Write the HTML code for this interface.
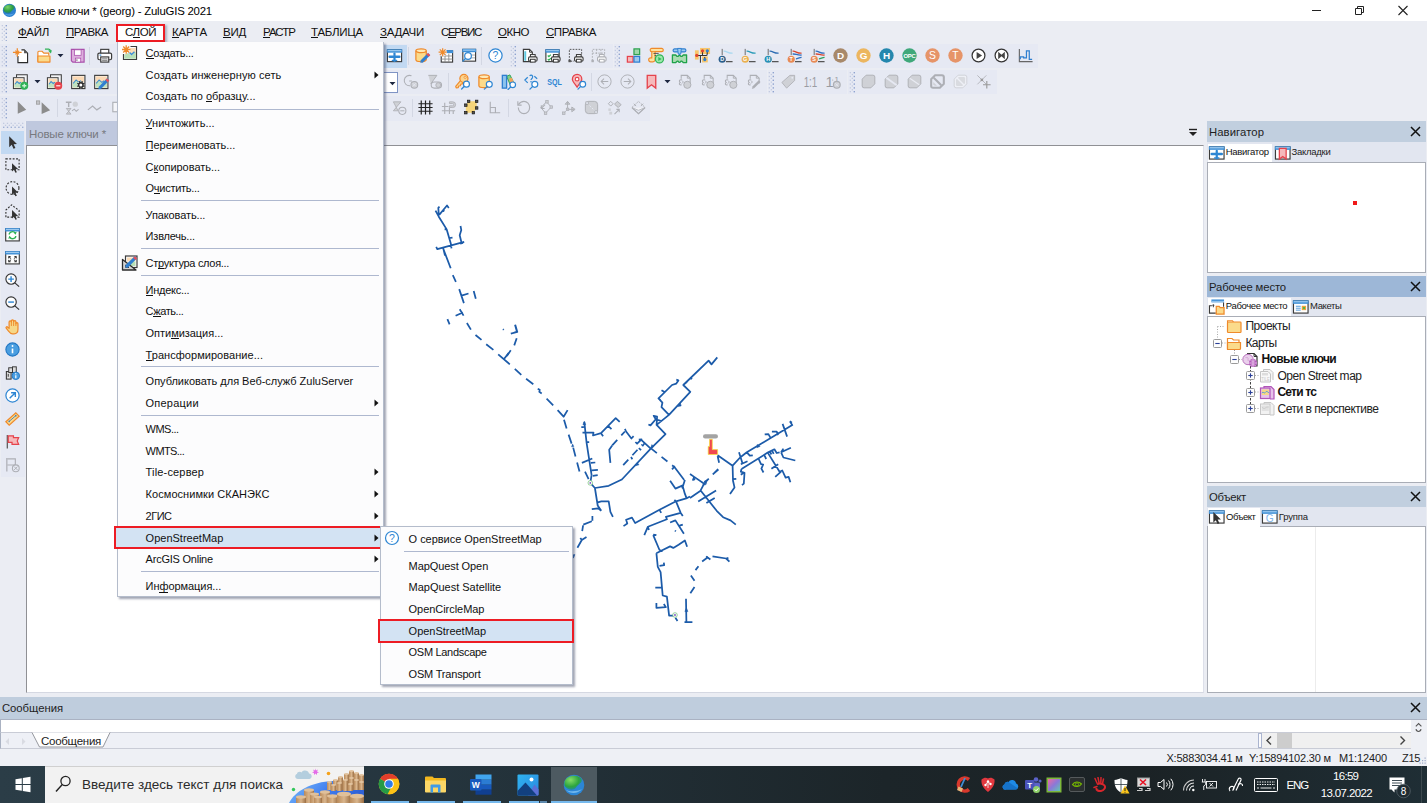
<!DOCTYPE html>
<html lang="ru"><head><meta charset="utf-8"><title>ZuluGIS 2021</title><style>
html,body{margin:0;padding:0;}
body{width:1427px;height:803px;overflow:hidden;position:relative;background:#ebedf3;font-family:"Liberation Sans",sans-serif;}
div,span.t,svg{position:absolute;}
span.t{white-space:pre;}
u{text-decoration:underline;text-underline-offset:1px;text-decoration-thickness:1px;}
</style></head><body>
<div style="left:0px;top:0px;width:1427px;height:21px;background:#ffffff;"></div>
<svg style="left:1300px;top:0" width="127" height="21" viewBox="0 0 127 21"><path d="M12 10.5h9" stroke="#222" stroke-width="1" fill="none"/><path d="M55.5 8.5h6v6h-6z M57.5 8.5v-2h6v6h-2" stroke="#222" stroke-width="1" fill="none"/><path d="M98.5 6l9 9m0-9l-9 9" stroke="#222" stroke-width="1.1" fill="none"/></svg>
<svg style="left:1px;top:24px" width="7" height="17" viewBox="0 0 7 17"><rect x="0.700" y="1.0" width="1.300" height="1.300" fill="#c3cbe0"/><rect x="4.600" y="1.0" width="1.400" height="1.400" fill="#8fa3cf"/><rect x="2.700" y="2.9" width="1.300" height="1.300" fill="#c3cbe0"/><rect x="0.700" y="4.8" width="1.300" height="1.300" fill="#c3cbe0"/><rect x="4.600" y="4.8" width="1.400" height="1.400" fill="#8fa3cf"/><rect x="2.700" y="6.7" width="1.300" height="1.300" fill="#c3cbe0"/><rect x="0.700" y="8.6" width="1.300" height="1.300" fill="#c3cbe0"/><rect x="4.600" y="8.6" width="1.400" height="1.400" fill="#8fa3cf"/><rect x="2.700" y="10.5" width="1.300" height="1.300" fill="#c3cbe0"/><rect x="0.700" y="12.4" width="1.300" height="1.300" fill="#c3cbe0"/><rect x="4.600" y="12.4" width="1.400" height="1.400" fill="#8fa3cf"/><rect x="2.700" y="14.3" width="1.300" height="1.300" fill="#c3cbe0"/><rect x="0.700" y="16.2" width="1.300" height="1.300" fill="#c3cbe0"/><rect x="4.600" y="16.2" width="1.400" height="1.400" fill="#8fa3cf"/></svg>
<div style="left:116px;top:24px;width:49px;height:18.2px;background:#ffffff;border:2px solid #ed1c24;box-sizing:border-box;box-shadow:1.5px 1px 2px rgba(60,70,100,0.35);"></div>
<div style="left:0px;top:44px;width:612.5px;height:24px;background:#e6e9f3;"></div>
<div style="left:613.5px;top:44px;width:424px;height:24px;background:#e6e9f3;"></div>
<div style="left:0px;top:70px;width:766.5px;height:24px;background:#e6e9f3;"></div>
<div style="left:767.5px;top:70px;width:79px;height:24px;background:#e6e9f3;"></div>
<div style="left:847.5px;top:70px;width:149px;height:24px;background:#e6e9f3;"></div>
<div style="left:0px;top:96px;width:650px;height:24.5px;background:#e6e9f3;"></div>
<svg style="left:1px;top:45px" width="7" height="22" viewBox="0 0 7 22"><rect x="0.700" y="1.0" width="1.300" height="1.300" fill="#c3cbe0"/><rect x="4.600" y="1.0" width="1.400" height="1.400" fill="#8fa3cf"/><rect x="2.700" y="2.9" width="1.300" height="1.300" fill="#c3cbe0"/><rect x="0.700" y="4.8" width="1.300" height="1.300" fill="#c3cbe0"/><rect x="4.600" y="4.8" width="1.400" height="1.400" fill="#8fa3cf"/><rect x="2.700" y="6.7" width="1.300" height="1.300" fill="#c3cbe0"/><rect x="0.700" y="8.6" width="1.300" height="1.300" fill="#c3cbe0"/><rect x="4.600" y="8.6" width="1.400" height="1.400" fill="#8fa3cf"/><rect x="2.700" y="10.5" width="1.300" height="1.300" fill="#c3cbe0"/><rect x="0.700" y="12.4" width="1.300" height="1.300" fill="#c3cbe0"/><rect x="4.600" y="12.4" width="1.400" height="1.400" fill="#8fa3cf"/><rect x="2.700" y="14.3" width="1.300" height="1.300" fill="#c3cbe0"/><rect x="0.700" y="16.2" width="1.300" height="1.300" fill="#c3cbe0"/><rect x="4.600" y="16.2" width="1.400" height="1.400" fill="#8fa3cf"/><rect x="2.700" y="18.1" width="1.300" height="1.300" fill="#c3cbe0"/><rect x="0.700" y="20.0" width="1.300" height="1.300" fill="#c3cbe0"/><rect x="4.600" y="20.0" width="1.400" height="1.400" fill="#8fa3cf"/></svg>
<svg style="left:1px;top:71px" width="7" height="22" viewBox="0 0 7 22"><rect x="0.700" y="1.0" width="1.300" height="1.300" fill="#c3cbe0"/><rect x="4.600" y="1.0" width="1.400" height="1.400" fill="#8fa3cf"/><rect x="2.700" y="2.9" width="1.300" height="1.300" fill="#c3cbe0"/><rect x="0.700" y="4.8" width="1.300" height="1.300" fill="#c3cbe0"/><rect x="4.600" y="4.8" width="1.400" height="1.400" fill="#8fa3cf"/><rect x="2.700" y="6.7" width="1.300" height="1.300" fill="#c3cbe0"/><rect x="0.700" y="8.6" width="1.300" height="1.300" fill="#c3cbe0"/><rect x="4.600" y="8.6" width="1.400" height="1.400" fill="#8fa3cf"/><rect x="2.700" y="10.5" width="1.300" height="1.300" fill="#c3cbe0"/><rect x="0.700" y="12.4" width="1.300" height="1.300" fill="#c3cbe0"/><rect x="4.600" y="12.4" width="1.400" height="1.400" fill="#8fa3cf"/><rect x="2.700" y="14.3" width="1.300" height="1.300" fill="#c3cbe0"/><rect x="0.700" y="16.2" width="1.300" height="1.300" fill="#c3cbe0"/><rect x="4.600" y="16.2" width="1.400" height="1.400" fill="#8fa3cf"/><rect x="2.700" y="18.1" width="1.300" height="1.300" fill="#c3cbe0"/><rect x="0.700" y="20.0" width="1.300" height="1.300" fill="#c3cbe0"/><rect x="4.600" y="20.0" width="1.400" height="1.400" fill="#8fa3cf"/></svg>
<svg style="left:1px;top:97px" width="7" height="22" viewBox="0 0 7 22"><rect x="0.700" y="1.0" width="1.300" height="1.300" fill="#c3cbe0"/><rect x="4.600" y="1.0" width="1.400" height="1.400" fill="#8fa3cf"/><rect x="2.700" y="2.9" width="1.300" height="1.300" fill="#c3cbe0"/><rect x="0.700" y="4.8" width="1.300" height="1.300" fill="#c3cbe0"/><rect x="4.600" y="4.8" width="1.400" height="1.400" fill="#8fa3cf"/><rect x="2.700" y="6.7" width="1.300" height="1.300" fill="#c3cbe0"/><rect x="0.700" y="8.6" width="1.300" height="1.300" fill="#c3cbe0"/><rect x="4.600" y="8.6" width="1.400" height="1.400" fill="#8fa3cf"/><rect x="2.700" y="10.5" width="1.300" height="1.300" fill="#c3cbe0"/><rect x="0.700" y="12.4" width="1.300" height="1.300" fill="#c3cbe0"/><rect x="4.600" y="12.4" width="1.400" height="1.400" fill="#8fa3cf"/><rect x="2.700" y="14.3" width="1.300" height="1.300" fill="#c3cbe0"/><rect x="0.700" y="16.2" width="1.300" height="1.300" fill="#c3cbe0"/><rect x="4.600" y="16.2" width="1.400" height="1.400" fill="#8fa3cf"/><rect x="2.700" y="18.1" width="1.300" height="1.300" fill="#c3cbe0"/><rect x="0.700" y="20.0" width="1.300" height="1.300" fill="#c3cbe0"/><rect x="4.600" y="20.0" width="1.400" height="1.400" fill="#8fa3cf"/></svg>
<svg style="left:510px;top:45px" width="7" height="22" viewBox="0 0 7 22"><rect x="0.700" y="1.0" width="1.300" height="1.300" fill="#c3cbe0"/><rect x="4.600" y="1.0" width="1.400" height="1.400" fill="#8fa3cf"/><rect x="2.700" y="2.9" width="1.300" height="1.300" fill="#c3cbe0"/><rect x="0.700" y="4.8" width="1.300" height="1.300" fill="#c3cbe0"/><rect x="4.600" y="4.8" width="1.400" height="1.400" fill="#8fa3cf"/><rect x="2.700" y="6.7" width="1.300" height="1.300" fill="#c3cbe0"/><rect x="0.700" y="8.6" width="1.300" height="1.300" fill="#c3cbe0"/><rect x="4.600" y="8.6" width="1.400" height="1.400" fill="#8fa3cf"/><rect x="2.700" y="10.5" width="1.300" height="1.300" fill="#c3cbe0"/><rect x="0.700" y="12.4" width="1.300" height="1.300" fill="#c3cbe0"/><rect x="4.600" y="12.4" width="1.400" height="1.400" fill="#8fa3cf"/><rect x="2.700" y="14.3" width="1.300" height="1.300" fill="#c3cbe0"/><rect x="0.700" y="16.2" width="1.300" height="1.300" fill="#c3cbe0"/><rect x="4.600" y="16.2" width="1.400" height="1.400" fill="#8fa3cf"/><rect x="2.700" y="18.1" width="1.300" height="1.300" fill="#c3cbe0"/><rect x="0.700" y="20.0" width="1.300" height="1.300" fill="#c3cbe0"/><rect x="4.600" y="20.0" width="1.400" height="1.400" fill="#8fa3cf"/></svg>
<svg style="left:614px;top:45px" width="7" height="22" viewBox="0 0 7 22"><rect x="0.700" y="1.0" width="1.300" height="1.300" fill="#c3cbe0"/><rect x="4.600" y="1.0" width="1.400" height="1.400" fill="#8fa3cf"/><rect x="2.700" y="2.9" width="1.300" height="1.300" fill="#c3cbe0"/><rect x="0.700" y="4.8" width="1.300" height="1.300" fill="#c3cbe0"/><rect x="4.600" y="4.8" width="1.400" height="1.400" fill="#8fa3cf"/><rect x="2.700" y="6.7" width="1.300" height="1.300" fill="#c3cbe0"/><rect x="0.700" y="8.6" width="1.300" height="1.300" fill="#c3cbe0"/><rect x="4.600" y="8.6" width="1.400" height="1.400" fill="#8fa3cf"/><rect x="2.700" y="10.5" width="1.300" height="1.300" fill="#c3cbe0"/><rect x="0.700" y="12.4" width="1.300" height="1.300" fill="#c3cbe0"/><rect x="4.600" y="12.4" width="1.400" height="1.400" fill="#8fa3cf"/><rect x="2.700" y="14.3" width="1.300" height="1.300" fill="#c3cbe0"/><rect x="0.700" y="16.2" width="1.300" height="1.300" fill="#c3cbe0"/><rect x="4.600" y="16.2" width="1.400" height="1.400" fill="#8fa3cf"/><rect x="2.700" y="18.1" width="1.300" height="1.300" fill="#c3cbe0"/><rect x="0.700" y="20.0" width="1.300" height="1.300" fill="#c3cbe0"/><rect x="4.600" y="20.0" width="1.400" height="1.400" fill="#8fa3cf"/></svg>
<svg style="left:768px;top:71px" width="7" height="22" viewBox="0 0 7 22"><rect x="0.700" y="1.0" width="1.300" height="1.300" fill="#c3cbe0"/><rect x="4.600" y="1.0" width="1.400" height="1.400" fill="#8fa3cf"/><rect x="2.700" y="2.9" width="1.300" height="1.300" fill="#c3cbe0"/><rect x="0.700" y="4.8" width="1.300" height="1.300" fill="#c3cbe0"/><rect x="4.600" y="4.8" width="1.400" height="1.400" fill="#8fa3cf"/><rect x="2.700" y="6.7" width="1.300" height="1.300" fill="#c3cbe0"/><rect x="0.700" y="8.6" width="1.300" height="1.300" fill="#c3cbe0"/><rect x="4.600" y="8.6" width="1.400" height="1.400" fill="#8fa3cf"/><rect x="2.700" y="10.5" width="1.300" height="1.300" fill="#c3cbe0"/><rect x="0.700" y="12.4" width="1.300" height="1.300" fill="#c3cbe0"/><rect x="4.600" y="12.4" width="1.400" height="1.400" fill="#8fa3cf"/><rect x="2.700" y="14.3" width="1.300" height="1.300" fill="#c3cbe0"/><rect x="0.700" y="16.2" width="1.300" height="1.300" fill="#c3cbe0"/><rect x="4.600" y="16.2" width="1.400" height="1.400" fill="#8fa3cf"/><rect x="2.700" y="18.1" width="1.300" height="1.300" fill="#c3cbe0"/><rect x="0.700" y="20.0" width="1.300" height="1.300" fill="#c3cbe0"/><rect x="4.600" y="20.0" width="1.400" height="1.400" fill="#8fa3cf"/></svg>
<svg style="left:849px;top:71px" width="7" height="22" viewBox="0 0 7 22"><rect x="0.700" y="1.0" width="1.300" height="1.300" fill="#c3cbe0"/><rect x="4.600" y="1.0" width="1.400" height="1.400" fill="#8fa3cf"/><rect x="2.700" y="2.9" width="1.300" height="1.300" fill="#c3cbe0"/><rect x="0.700" y="4.8" width="1.300" height="1.300" fill="#c3cbe0"/><rect x="4.600" y="4.8" width="1.400" height="1.400" fill="#8fa3cf"/><rect x="2.700" y="6.7" width="1.300" height="1.300" fill="#c3cbe0"/><rect x="0.700" y="8.6" width="1.300" height="1.300" fill="#c3cbe0"/><rect x="4.600" y="8.6" width="1.400" height="1.400" fill="#8fa3cf"/><rect x="2.700" y="10.5" width="1.300" height="1.300" fill="#c3cbe0"/><rect x="0.700" y="12.4" width="1.300" height="1.300" fill="#c3cbe0"/><rect x="4.600" y="12.4" width="1.400" height="1.400" fill="#8fa3cf"/><rect x="2.700" y="14.3" width="1.300" height="1.300" fill="#c3cbe0"/><rect x="0.700" y="16.2" width="1.300" height="1.300" fill="#c3cbe0"/><rect x="4.600" y="16.2" width="1.400" height="1.400" fill="#8fa3cf"/><rect x="2.700" y="18.1" width="1.300" height="1.300" fill="#c3cbe0"/><rect x="0.700" y="20.0" width="1.300" height="1.300" fill="#c3cbe0"/><rect x="4.600" y="20.0" width="1.400" height="1.400" fill="#8fa3cf"/></svg>
<div style="left:1px;top:121px;width:23.5px;height:356px;background:#e6e9f3;"></div>
<svg style="left:2px;top:122px" width="22" height="7" viewBox="0 0 22 7"><rect y="0.700" x="1.0" width="1.300" height="1.300" fill="#c3cbe0"/><rect y="4.600" x="1.0" width="1.400" height="1.400" fill="#9fb0d4"/><rect y="2.700" x="2.9" width="1.300" height="1.300" fill="#c3cbe0"/><rect y="0.700" x="4.8" width="1.300" height="1.300" fill="#c3cbe0"/><rect y="4.600" x="4.8" width="1.400" height="1.400" fill="#9fb0d4"/><rect y="2.700" x="6.7" width="1.300" height="1.300" fill="#c3cbe0"/><rect y="0.700" x="8.6" width="1.300" height="1.300" fill="#c3cbe0"/><rect y="4.600" x="8.6" width="1.400" height="1.400" fill="#9fb0d4"/><rect y="2.700" x="10.5" width="1.300" height="1.300" fill="#c3cbe0"/><rect y="0.700" x="12.4" width="1.300" height="1.300" fill="#c3cbe0"/><rect y="4.600" x="12.4" width="1.400" height="1.400" fill="#9fb0d4"/><rect y="2.700" x="14.3" width="1.300" height="1.300" fill="#c3cbe0"/><rect y="0.700" x="16.2" width="1.300" height="1.300" fill="#c3cbe0"/><rect y="4.600" x="16.2" width="1.400" height="1.400" fill="#9fb0d4"/><rect y="2.700" x="18.1" width="1.300" height="1.300" fill="#c3cbe0"/><rect y="0.700" x="20.0" width="1.300" height="1.300" fill="#c3cbe0"/><rect y="4.600" x="20.0" width="1.400" height="1.400" fill="#9fb0d4"/></svg>
<div style="left:1px;top:131px;width:23px;height:23px;background:#c2d9f2;"></div>
<div style="left:26px;top:121px;width:358px;height:24px;background:#bfc8de;"></div>
<div style="left:26px;top:145px;width:1178px;height:548px;background:#ffffff;border-left:1px solid #8f9094;border-top:1px solid #8f9094;border-right:1px solid #dde0ea;border-bottom:1px solid #d5d8e2;box-sizing:border-box;"></div>
<svg style="left:1188px;top:127.500px" width="11" height="10" viewBox="0 0 11 10"><path d="M1 1.5h8" stroke="#222" stroke-width="1.4"/><path d="M1 4h8l-4 4z" fill="#222"/></svg>
<div style="left:1207px;top:121.4px;width:219px;height:21px;background:#c1cfdf;"></div>
<svg style="left:1410px;top:126.4px" width="11" height="11" viewBox="0 0 11 11"><path d="M1 1l9 9m0-9l-9 9" stroke="#111" stroke-width="1.5" fill="none"/></svg>
<div style="left:1207px;top:142.4px;width:219px;height:19.599999999999994px;background:#e2e6f0;"></div>
<div style="left:1207px;top:162px;width:219px;height:111px;background:#ffffff;border:1px solid #a9adb6;box-sizing:border-box;"></div>
<div style="left:1207px;top:276px;width:219px;height:21px;background:#9db7d7;"></div>
<svg style="left:1410px;top:281px" width="11" height="11" viewBox="0 0 11 11"><path d="M1 1l9 9m0-9l-9 9" stroke="#111" stroke-width="1.5" fill="none"/></svg>
<div style="left:1207px;top:297px;width:219px;height:19px;background:#e2e6f0;"></div>
<div style="left:1207px;top:316px;width:219px;height:167px;background:#ffffff;border:1px solid #a9adb6;box-sizing:border-box;"></div>
<div style="left:1207px;top:486px;width:219px;height:21px;background:#c1cfdf;"></div>
<svg style="left:1410px;top:491px" width="11" height="11" viewBox="0 0 11 11"><path d="M1 1l9 9m0-9l-9 9" stroke="#111" stroke-width="1.5" fill="none"/></svg>
<div style="left:1207px;top:507px;width:219px;height:19px;background:#e2e6f0;"></div>
<div style="left:1207px;top:526px;width:219px;height:167px;background:#ffffff;border:1px solid #a9adb6;box-sizing:border-box;"></div>
<div style="left:1208px;top:144px;width:64px;height:18px;background:#ffffff;"></div>
<div style="left:1208px;top:298.2px;width:82.5px;height:18px;background:#ffffff;"></div>
<div style="left:1208px;top:508px;width:51.5px;height:18.5px;background:#ffffff;"></div>
<div style="left:1353px;top:200.8px;width:4px;height:4px;background:#f01818;"></div>
<div style="left:1315px;top:527px;width:1px;height:165px;background:#ececec;"></div>
<div style="left:0px;top:697px;width:1427px;height:22px;background:#bfcddd;"></div>
<svg style="left:1410px;top:702px" width="11" height="11" viewBox="0 0 11 11"><path d="M1 1l9 9m0-9l-9 9" stroke="#111" stroke-width="1.5" fill="none"/></svg>
<div style="left:0px;top:719px;width:1427px;height:13px;background:#ffffff;border-top:1px solid #aab2c2;border-left:1px solid #aab2c2;box-sizing:border-box;"></div>
<div style="left:0px;top:732px;width:1427px;height:17px;background:#eef0f6;border-top:1px solid #c9ccd6;border-bottom:1px solid #c9ccd6;border-left:1px solid #aab2c2;box-sizing:border-box;"></div>
<svg style="left:0;top:732px" width="130" height="17" viewBox="0 0 130 17"><path d="M32 0.5 L39.5 15 H103 L110 0.5" fill="#fff" stroke="#8b8d94" stroke-width="0.9"/><path d="M9 6l-3.5 3.5L9 13z M22 6l3.500 3.5L22 13z" fill="#d9dbe2"/></svg>
<div style="left:1257.5px;top:733px;width:4px;height:15px;background:#fbfbfd;border:1px solid #aab4cf;box-sizing:border-box;"></div>
<div style="left:1262px;top:733px;width:149px;height:15px;background:#f0f0f0;"></div>
<div style="left:1277.4px;top:733px;width:15px;height:15px;background:#cdcdcd;"></div>
<svg style="left:1262px;top:733px" width="149" height="15" viewBox="0 0 149 15"><path d="M9 3.500l-4 4 4 4 M138.500 3.500l4 4-4 4" stroke="#444" stroke-width="1.400" fill="none"/></svg>
<div style="left:1411px;top:720px;width:16px;height:29px;background:#eef0f5;"></div>
<svg style="left:1411px;top:720px" width="16" height="14" viewBox="0 0 16 14"><path d="M4.800 6.300l2.800-2.800 2.800 2.800 M5 9.200c0.500 3 4.500 3 5 0" stroke="#555" stroke-width="1.100" fill="none"/></svg>
<div style="left:0px;top:749px;width:1427px;height:17px;background:#eef0f5;"></div>
<svg style="left:1418px;top:756px" width="9" height="9" viewBox="0 0 9 9"><rect x="6.5" y="1.5" width="1.200" height="1.200" fill="#9aa8c8"/><rect x="4" y="4" width="1.200" height="1.200" fill="#9aa8c8"/><rect x="6.5" y="4" width="1.200" height="1.200" fill="#9aa8c8"/><rect x="1.5" y="6.5" width="1.200" height="1.200" fill="#9aa8c8"/><rect x="4" y="6.5" width="1.200" height="1.200" fill="#9aa8c8"/><rect x="6.5" y="6.5" width="1.200" height="1.200" fill="#9aa8c8"/></svg>
<div style="left:0px;top:766px;width:1427px;height:37px;background:linear-gradient(90deg,#2b3d47 0,#25353e 30%,#1c2529 62%,#1b2225 80%,#1f2e35 100%);"></div>
<div style="left:45px;top:766px;width:319.2px;height:37px;background:#f2f2f2;border-top:1px solid #d0d0d0;box-sizing:border-box;"></div>
<svg style="left:12.0px;top:47.0px" width="17" height="17" viewBox="0 0 18 18"><path d="M6.300 3H13L16.500 6.500V16.500H6.300z" fill="#fff"/><path d="M6.300 9.500V16.500H16.500V6.500L13 3H10" fill="none" stroke="#2a2a2a" stroke-width="1.200"/><path d="M12.800 3V6.700H16.500z" fill="#555"/><path d="M1 5.800H10.200M5.600 1.200V10.400" stroke="#ef8a2b" stroke-width="1.300"/><path d="M3.600 3.800L7.600 7.800M7.600 3.800L3.600 7.800" stroke="#ef8a2b" stroke-width="1.200"/></svg>
<svg style="left:35.5px;top:47.0px" width="17" height="17" viewBox="0 0 18 18"><path d="M2 15.500V5.500a1 1 0 0 1 1-1H6.500l1.800 2H13.500V9" fill="#fff" stroke="#ef8a2b" stroke-width="1.200"/><path d="M2 16V9.500H14.800V16z" fill="#fbdb8b" stroke="#ef8a2b" stroke-width="1.200" stroke-linejoin="round"/><path d="M9.500 2.300H13.500Q15 2.300 15.300 4.500" fill="none" stroke="#2fb256" stroke-width="1.400"/><path d="M12.800 3.800L16.800 3.400 15.800 7z" fill="#2fb256"/></svg>
<svg style="left:51.5px;top:47.0px" width="17" height="17" viewBox="0 0 18 18"><path d="M5.800 7.500H12.200L9 10.800z" fill="#1d2740"/></svg>
<svg style="left:69.0px;top:47.0px" width="17" height="17" viewBox="0 0 18 18"><path d="M2.500 2.500H16V16H4L2.500 14.500z" fill="#dcaedd" stroke="#a94fab" stroke-width="1.200"/><rect x="5.800" y="3" width="7" height="5.800" fill="#fff" stroke="#a94fab" stroke-width="0.800"/><rect x="6.800" y="11.800" width="5.600" height="4.200" fill="#fff" stroke="#a94fab" stroke-width="0.800"/><rect x="7.600" y="13" width="1.500" height="1.800" fill="#999"/></svg>
<svg style="left:96.0px;top:47.0px" width="17" height="17" viewBox="0 0 18 18"><rect x="5" y="2.500" width="8.500" height="5" fill="#fff" stroke="#3b3b3b" stroke-width="1.2"/><rect x="2" y="6.500" width="14.500" height="7" rx="1.5" fill="#fff" stroke="#3b3b3b" stroke-width="1.3"/><rect x="5" y="10.500" width="8.500" height="5.500" fill="#e8e8e8" stroke="#3b3b3b" stroke-width="1.2"/><path d="M6.500 12.500h5.500M6.500 14.200h5.500" stroke="#777" stroke-width="0.900"/><rect x="3.800" y="8" width="1.800" height="1.200" fill="#2e86d3"/></svg>
<div style="left:89px;top:47px;width:1px;height:18px;background:#d3d7e3;"></div>
<div style="left:384px;top:44.5px;width:22.5px;height:23px;background:#c2d9f2;"></div>
<svg style="left:386.0px;top:47.0px" width="17" height="17" viewBox="0 0 18 18"><rect x="1.5" y="3" width="15" height="12.5" fill="#fff" stroke="#3b3b3b" stroke-width="1.2"/><rect x="0.9" y="2.4" width="16.2" height="3.600" fill="#3f8fd6"/><rect x="1.8" y="3.2" width="14.4" height="1.300" fill="#9cc9ef"/><path d="M9 7V14.800" stroke="#2e86d3" stroke-width="2.300" stroke-linecap="round"/><path d="M3.800 10.300H14.200" stroke="#2e86d3" stroke-width="2.500" stroke-linecap="round"/><path d="M6.800 14.300H11.200" stroke="#2e86d3" stroke-width="1.500" stroke-linecap="round"/></svg>
<svg style="left:414.0px;top:47.0px" width="17" height="17" viewBox="0 0 18 18"><path d="M2 4V13.5A5.5 2 0 0 0 13 13.5V4" fill="#fbdb8b" stroke="#ef8a2b" stroke-width="1.3"/><ellipse cx="7.5" cy="4" rx="5.5" ry="2" fill="#fde9b5" stroke="#ef8a2b" stroke-width="1.3"/><path d="M8 15.5L16 7.5" stroke="#2f7fd0" stroke-width="3.200" stroke-linecap="butt"/><path d="M14.4 9.3L16 7.5" stroke="#e8505a" stroke-width="3.200"/><path d="M6.7 16.8l0.4-2.600 2.200 2.200z" fill="#2f7fd0"/></svg>
<svg style="left:437.0px;top:47.0px" width="17" height="17" viewBox="0 0 18 18"><rect x="4.500" y="4" width="12" height="12" fill="#fff" stroke="#3b3b3b" stroke-width="1.200"/><rect x="8" y="3.300" width="9" height="3.200" fill="#3f8fd6"/><path d="M4.500 9.500H16.500M4.500 12.800H16.500M8.500 7V16M12.500 7V16" stroke="#888" stroke-width="0.900"/><circle cx="6" cy="5.500" r="4.500" fill="#e6e9f3"/><path d="M1.70 5.50L10.30 5.50M2.96 2.46L9.04 8.54M6.00 1.20L6.00 9.80M9.04 2.46L2.96 8.54" stroke="#ef8a2b" stroke-width="1.3" fill="none"/></svg>
<svg style="left:460.0px;top:47.0px" width="17" height="17" viewBox="0 0 18 18"><rect x="3" y="2.5" width="13.5" height="12.5" fill="#fff" stroke="#3b3b3b" stroke-width="1.2"/><rect x="2.4" y="1.9" width="14.7" height="3.600" fill="#3f8fd6"/><rect x="3.3" y="2.7" width="12.9" height="1.300" fill="#9cc9ef"/><path d="M10 8.500h6M10 11.500h6" stroke="#999" stroke-width="0.900"/><path d="M6.02 11.98L3.12 14.88" stroke="#2e86d3" stroke-width="1.350" stroke-linecap="round"/><circle cx="8.5" cy="9.5" r="3.5500000000000003" fill="#fff" stroke="#2e86d3" stroke-width="1.250"/></svg>
<svg style="left:486.5px;top:47.0px" width="17" height="17" viewBox="0 0 18 18"><circle cx="9" cy="9" r="7" fill="#fff" stroke="#2e86d3" stroke-width="1.300"/><text x="9" y="13" text-anchor="middle" font-family="Liberation Sans,sans-serif" font-size="11" fill="#2e86d3">?</text></svg>
<svg style="left:521.0px;top:47.0px" width="17" height="17" viewBox="0 0 18 18"><path d="M2.500 2.500H9l3 3V15.500H2.500z" fill="#fff" stroke="#3b3b3b" stroke-width="1.200"/><rect x="3.500" y="4.500" width="2" height="10" fill="#5cc7e0"/><path d="M9 2.500v3h3" fill="none" stroke="#3b3b3b" stroke-width="1"/><rect x="10" y="8" width="5" height="3" fill="#fff" stroke="#3b3b3b" stroke-width="1.1"/><rect x="8" y="10.5" width="9" height="4.5" rx="1.3" fill="#fff" stroke="#3b3b3b" stroke-width="1.2"/><rect x="10" y="13" width="5" height="3" fill="#fff" stroke="#3b3b3b" stroke-width="1.1"/></svg>
<svg style="left:544.0px;top:47.0px" width="17" height="17" viewBox="0 0 18 18"><rect x="2" y="3" width="14" height="12.5" fill="#fff" stroke="#3b3b3b" stroke-width="1.2"/><rect x="1.4" y="2.4" width="15.2" height="3.600" fill="#3f8fd6"/><rect x="2.3" y="3.2" width="13.4" height="1.300" fill="#9cc9ef"/><path d="M4 9l1.200 1.200 2-2.200M4 12.800l1.200 1.200 2-2.200" stroke="#2fb256" stroke-width="1.300" fill="none"/><rect x="10" y="8" width="5" height="3" fill="#fff" stroke="#3b3b3b" stroke-width="1.1"/><rect x="8" y="10.5" width="9" height="4.5" rx="1.3" fill="#fff" stroke="#3b3b3b" stroke-width="1.2"/><rect x="10" y="13" width="5" height="3" fill="#fff" stroke="#3b3b3b" stroke-width="1.1"/></svg>
<svg style="left:567.0px;top:47.0px" width="17" height="17" viewBox="0 0 18 18"><path d="M2.500 14.500V2.500H15.500V8" fill="none" stroke="#3b3b3b" stroke-width="0.900" stroke-dasharray="1.800 1.300"/><rect x="1.500" y="13.500" width="2.600" height="2.600" fill="#555"/><path d="M4 15h3" stroke="#3b3b3b" stroke-width="1" stroke-dasharray="1.500 1"/><rect x="10" y="8" width="5" height="3" fill="#fff" stroke="#3b3b3b" stroke-width="1.1"/><rect x="8" y="10.5" width="9" height="4.5" rx="1.3" fill="#fff" stroke="#3b3b3b" stroke-width="1.2"/><rect x="10" y="13" width="5" height="3" fill="#fff" stroke="#3b3b3b" stroke-width="1.1"/></svg>
<svg style="left:590.0px;top:47.0px" width="17" height="17" viewBox="0 0 18 18"><path d="M2.500 14.500V2.500H15.500V8M2.500 6.500H15.500M7 2.500V9M11.500 2.500V8" fill="none" stroke="#adafb5" stroke-width="1" stroke-dasharray="1.800 1.300"/><rect x="1.500" y="13.500" width="2.600" height="2.600" fill="#adafb5"/><rect x="10" y="8" width="5" height="3" fill="#fff" stroke="#adafb5" stroke-width="1.1"/><rect x="8" y="10.5" width="9" height="4.5" rx="1.3" fill="#fff" stroke="#adafb5" stroke-width="1.2"/><rect x="10" y="13" width="5" height="3" fill="#fff" stroke="#adafb5" stroke-width="1.1"/></svg>
<svg style="left:624.5px;top:47.0px" width="17" height="17" viewBox="0 0 18 18"><rect x="9.500" y="2" width="6" height="6" fill="#9fd7ab" stroke="#2da14e" stroke-width="1.300"/><rect x="2.500" y="10" width="6" height="6" fill="#f6b9bb" stroke="#e5434c" stroke-width="1.300"/><rect x="9.500" y="10" width="6" height="6" fill="#9cc9ef" stroke="#2f7fd0" stroke-width="1.300"/></svg>
<svg style="left:648.0px;top:47.0px" width="17" height="17" viewBox="0 0 18 18"><path d="M4 1.500H14.500a1.700 1.700 0 0 1 0 3.400H7.500V13.500a2.200 2.200 0 0 1-2.200 2.200H2.800a1.900 1.900 0 0 1 0-4.200H4V4.900A1.700 1.700 0 0 1 4 1.500z" fill="#fde3a0" stroke="#ef8a2b" stroke-width="1.200"/><path d="M4 4.900H7.500" stroke="#ef8a2b" stroke-width="1"/><path d="M5.800 6.800h5.500M7 9h1.500" stroke="#444" stroke-width="0.900"/><circle cx="12.100" cy="12.600" r="4.300" fill="#9be8aa" stroke="#2fb256" stroke-width="1.300"/><path d="M10.900 10.500V14.700L14.500 12.600z" fill="#35b65c"/></svg>
<svg style="left:671.0px;top:47.0px" width="17" height="17" viewBox="0 0 18 18"><path d="M1.500 8.500H5L6.500 10H7.500Q9 7.500 10.500 10H11.500L13 8.500H16.500V16.500H13L11.500 15H10.500Q9 17.500 7.500 15H6.500L5 16.500H1.500z" fill="#abdcb2" stroke="#1fa34a" stroke-width="1.400" stroke-linejoin="round"/><path d="M9 8.500V5" stroke="#2f7fd0" stroke-width="1.400"/><rect x="2.200" y="2" width="13.600" height="3.200" rx="1.600" fill="#9ccdf0" stroke="#2f7fd0" stroke-width="1.200"/><path d="M7 1.500H11L10.300 7.500H7.700z" fill="#9ccdf0" stroke="#2f7fd0" stroke-width="1"/></svg>
<svg style="left:694.0px;top:47.0px" width="17" height="17" viewBox="0 0 18 18"><rect x="6.400" y="1" width="10.600" height="6.400" fill="#f7c66b"/><rect x="1" y="3.500" width="4" height="9.800" fill="#f7c66b"/><rect x="8.500" y="10" width="6.100" height="6.300" fill="#f7c66b"/><path d="M3 8.900H13Q14 8.900 14 7.500V4M9 4V8.900M6.800 8.900V16.600M11.400 10.500V13" stroke="#333" stroke-width="1.100" fill="none"/><circle cx="9" cy="4" r="1.700" fill="#e2452f"/><circle cx="14.100" cy="4" r="1.700" fill="#2f7fd0"/><circle cx="2.900" cy="8.900" r="1.700" fill="#e2452f"/><circle cx="11.400" cy="13.300" r="1.700" fill="#2f7fd0"/></svg>
<svg style="left:716.5px;top:47.0px" width="17" height="17" viewBox="0 0 18 18"><path d="M5.500 2V8.500" stroke="#666" stroke-width="1"/><path d="M9.500 15.500H16.500" stroke="#555" stroke-width="1.300"/><path d="M7 4.500C10 4 12 7 16.500 6.500" stroke="#a8d8f0" stroke-width="1.400" fill="none"/><circle cx="5.500" cy="13" r="3.800" fill="#2c5f8a"/><text x="5.500" y="15.100" text-anchor="middle" font-family="Liberation Sans,sans-serif" font-size="5.800" font-weight="bold" fill="#fff">D</text></svg>
<svg style="left:739.5px;top:47.0px" width="17" height="17" viewBox="0 0 18 18"><path d="M5.500 2V8.500" stroke="#666" stroke-width="1"/><path d="M9.500 15.500H16.500" stroke="#555" stroke-width="1.300"/><path d="M7 4.500C10 4 12 7 16.500 6.500" stroke="#2a9bb8" stroke-width="1.400" fill="none"/><circle cx="5.500" cy="13" r="3.800" fill="#ebb14f"/><text x="5.500" y="15.100" text-anchor="middle" font-family="Liberation Sans,sans-serif" font-size="5.800" font-weight="bold" fill="#fff">G</text></svg>
<svg style="left:762.5px;top:47.0px" width="17" height="17" viewBox="0 0 18 18"><path d="M5.500 2V8.500" stroke="#666" stroke-width="1"/><path d="M9.500 15.500H16.500" stroke="#555" stroke-width="1.300"/><path d="M7 4.500C10 4 12 7 16.500 6.500" stroke="#2a6bb3" stroke-width="1.400" fill="none"/><circle cx="5.500" cy="13" r="3.800" fill="#2a8fb3"/><text x="5.500" y="15.100" text-anchor="middle" font-family="Liberation Sans,sans-serif" font-size="5.800" font-weight="bold" fill="#fff">H</text></svg>
<svg style="left:785.5px;top:47.0px" width="17" height="17" viewBox="0 0 18 18"><path d="M5.500 2V8.500" stroke="#666" stroke-width="1"/><path d="M9.500 15.500H16.500" stroke="#555" stroke-width="1.300"/><path d="M7 4.500C10 4 12 7 16.500 6.500" stroke="#d8452f" stroke-width="1.400" fill="none"/><path d="M7 7.500C10 7 12 9 16.500 8.500" stroke="#2f6fc0" stroke-width="1.400" fill="none"/><path d="M10.500 12.500C12.500 12.500 14 11 16.500 11" stroke="#2f6fc0" stroke-width="1.400" fill="none"/><circle cx="5.500" cy="13" r="3.800" fill="#e88a55"/><text x="5.500" y="15.100" text-anchor="middle" font-family="Liberation Sans,sans-serif" font-size="5.800" font-weight="bold" fill="#fff">T</text></svg>
<svg style="left:808.5px;top:47.0px" width="17" height="17" viewBox="0 0 18 18"><path d="M5.500 2V8.500" stroke="#666" stroke-width="1"/><path d="M9.500 15.500H16.500" stroke="#555" stroke-width="1.300"/><path d="M7 4.500C10 4 12 7 16.500 6.500" stroke="#2f6fc0" stroke-width="1.400" fill="none"/><path d="M7 7.500C10 7 12 9 16.500 8.500" stroke="#d8452f" stroke-width="1.400" fill="none"/><path d="M10.500 12.500C12.500 12.500 14 11 16.500 11" stroke="#2fa060" stroke-width="1.400" fill="none"/><circle cx="5.500" cy="13" r="3.800" fill="#e88a55"/><text x="5.500" y="15.100" text-anchor="middle" font-family="Liberation Sans,sans-serif" font-size="5.800" font-weight="bold" fill="#fff">S</text></svg>
<svg style="left:832.0px;top:47.0px" width="17" height="17" viewBox="0 0 18 18"><circle cx="9" cy="9" r="7.600" fill="#a8896a"/><text x="9" y="12.7" text-anchor="middle" font-family="Liberation Sans,sans-serif" font-size="10.5" font-weight="bold" fill="#fff" letter-spacing="0">D</text></svg>
<svg style="left:855.0px;top:47.0px" width="17" height="17" viewBox="0 0 18 18"><circle cx="9" cy="9" r="7.600" fill="#ecb65f"/><text x="9" y="12.7" text-anchor="middle" font-family="Liberation Sans,sans-serif" font-size="10.5" font-weight="bold" fill="#fff" letter-spacing="0">G</text></svg>
<svg style="left:878.0px;top:47.0px" width="17" height="17" viewBox="0 0 18 18"><circle cx="9" cy="9" r="7.600" fill="#2487ad"/><text x="9" y="12.7" text-anchor="middle" font-family="Liberation Sans,sans-serif" font-size="10.5" font-weight="bold" fill="#fff" letter-spacing="0">H</text></svg>
<svg style="left:901.0px;top:47.0px" width="17" height="17" viewBox="0 0 18 18"><circle cx="9" cy="9" r="7.600" fill="#3fa87a"/><text x="9" y="11.2" text-anchor="middle" font-family="Liberation Sans,sans-serif" font-size="6.2" font-weight="bold" fill="#fff" letter-spacing="-0.3">OPC</text></svg>
<svg style="left:924.0px;top:47.0px" width="17" height="17" viewBox="0 0 18 18"><circle cx="9" cy="9" r="7.600" fill="#e69468"/><text x="9" y="12.9" text-anchor="middle" font-family="Liberation Sans,sans-serif" font-size="11" font-weight="normal" fill="#fff" letter-spacing="0">S</text></svg>
<svg style="left:947.0px;top:47.0px" width="17" height="17" viewBox="0 0 18 18"><circle cx="9" cy="9" r="7.600" fill="#e69468"/><text x="9" y="12.9" text-anchor="middle" font-family="Liberation Sans,sans-serif" font-size="11" font-weight="normal" fill="#fff" letter-spacing="0">T</text></svg>
<svg style="left:970.0px;top:47.0px" width="17" height="17" viewBox="0 0 18 18"><circle cx="9" cy="9" r="6.800" fill="#fff" stroke="#333" stroke-width="1.300"/><path d="M7 5.200V12.800L12.800 9z" fill="#444"/></svg>
<svg style="left:993.0px;top:47.0px" width="17" height="17" viewBox="0 0 18 18"><circle cx="9" cy="9" r="6.800" fill="#fff" stroke="#333" stroke-width="1.300"/><path d="M5.500 5V13L9 9.800 12.500 13V5L9 8.200z" fill="#444"/></svg>
<svg style="left:1016.5px;top:47.0px" width="17" height="17" viewBox="0 0 18 18"><path d="M2.500 2V15.500H16.500" stroke="#666" stroke-width="1.200" fill="none"/><path d="M3.500 13V10.500H7V11.500H10V4H13V13H16" stroke="#2f7fd0" stroke-width="1.300" fill="none"/></svg>
<div style="left:408px;top:47px;width:1px;height:18px;background:#d3d7e3;"></div>
<div style="left:481px;top:47px;width:1px;height:18px;background:#d3d7e3;"></div>
<svg style="left:12.0px;top:73.0px" width="17" height="17" viewBox="0 0 18 18"><path d="M4.800 4.800V1.800H16.200V13.200H13" fill="#f3f4f7" stroke="#3b3b3b" stroke-width="1.100"/><rect x="1.500" y="5" width="11.300" height="11.500" fill="#fff" stroke="#3b3b3b" stroke-width="1.100"/><rect x="2.6" y="6.1" width="9.2" height="9.3" fill="#fbd9b5"/><path d="M2.6 15.4 V11.866 l2.76 -2.79 l2.3 2.0460000000000003 l1.8399999999999999 -1.395 L11.799999999999999 11.68 V15.4z" fill="#bfe3c0"/><path d="M3.1 11.866 l2.26 -2.79 l2.3 2.0460000000000003 l1.8399999999999999 -1.395" stroke="#3f8fd0" stroke-width="1.1" fill="none"/><circle cx="13" cy="13.500" r="4.200" fill="#2fb256"/><path d="M10.800 13.500h4.400M13 11.300v4.400" stroke="#c9f2d3" stroke-width="1.400"/></svg>
<svg style="left:28.5px;top:73.0px" width="17" height="17" viewBox="0 0 18 18"><path d="M5.800 7.500H12.200L9 10.800z" fill="#1d2740"/></svg>
<svg style="left:46.0px;top:73.0px" width="17" height="17" viewBox="0 0 18 18"><path d="M4.800 4.800V1.800H16.200V13.200H13" fill="#f3f4f7" stroke="#3b3b3b" stroke-width="1.100"/><rect x="1.500" y="5" width="11.300" height="11.500" fill="#fff" stroke="#3b3b3b" stroke-width="1.100"/><rect x="2.6" y="6.1" width="9.2" height="9.3" fill="#fbd9b5"/><path d="M2.6 15.4 V11.866 l2.76 -2.79 l2.3 2.0460000000000003 l1.8399999999999999 -1.395 L11.799999999999999 11.68 V15.4z" fill="#bfe3c0"/><path d="M3.1 11.866 l2.26 -2.79 l2.3 2.0460000000000003 l1.8399999999999999 -1.395" stroke="#3f8fd0" stroke-width="1.1" fill="none"/><circle cx="13" cy="13.500" r="4.200" fill="#e5434c"/><path d="M10.800 13.500h4.400" stroke="#fbd3d5" stroke-width="1.500"/></svg>
<svg style="left:69.5px;top:73.0px" width="17" height="17" viewBox="0 0 18 18"><rect x="1.800" y="2.500" width="14" height="14" fill="#fff" stroke="#3b3b3b" stroke-width="1.2"/><rect x="2.9" y="3.6" width="11.8" height="11.8" fill="#fbd9b5"/><path d="M2.9 15.4 V10.916 l3.54 -3.54 l2.95 2.596 l2.3600000000000003 -1.77 L14.700000000000001 10.68 V15.4z" fill="#bfe3c0"/><path d="M3.4 10.916 l3.04 -3.54 l2.95 2.596 l2.3600000000000003 -1.77" stroke="#3f8fd0" stroke-width="1.1" fill="none"/><circle cx="11.5" cy="12.6" r="3.5" fill="#fff"/><circle cx="11.5" cy="12.6" r="2.3" fill="#fff" stroke="#2b2b2b" stroke-width="1.400"/><path d="M13.90 13.59L15.29 14.17M12.49 15.00L13.07 16.39M10.51 15.00L9.93 16.39M9.10 13.59L7.71 14.17M9.10 11.61L7.71 11.03M10.51 10.20L9.93 8.81M12.49 10.20L13.07 8.81M13.90 11.61L15.29 11.03" stroke="#2b2b2b" stroke-width="1.500"/></svg>
<svg style="left:92.5px;top:73.0px" width="17" height="17" viewBox="0 0 18 18"><rect x="1.800" y="2.500" width="14" height="14" fill="#fff" stroke="#3b3b3b" stroke-width="1.2"/><rect x="2.9" y="3.6" width="11.8" height="11.8" fill="#fbd9b5"/><path d="M2.9 15.4 V10.916 l3.54 -3.54 l2.95 2.596 l2.3600000000000003 -1.77 L14.700000000000001 10.68 V15.4z" fill="#bfe3c0"/><path d="M3.4 10.916 l3.04 -3.54 l2.95 2.596 l2.3600000000000003 -1.77" stroke="#3f8fd0" stroke-width="1.1" fill="none"/><path d="M7 16L16 6.8" stroke="#2f7fd0" stroke-width="3.200" stroke-linecap="butt"/><path d="M14.4 8.6L16 6.8" stroke="#e8505a" stroke-width="3.200"/><path d="M5.7 17.3l0.4-2.600 2.200 2.200z" fill="#2f7fd0"/></svg>
<svg style="left:403.0px;top:73.0px" width="17" height="17" viewBox="0 0 18 18"><path d="M9 3A5.500 5.500 0 1 0 7.500 13.500" fill="none" stroke="#adafb5" stroke-width="1.100"/><path d="M6.500 8.500H9.500" stroke="#adafb5" stroke-width="1"/><circle cx="12" cy="12.500" r="3.600" fill="#cfd1d6" stroke="#adafb5" stroke-width="1.100"/><path d="M10.300 10.800l3.400 3.400m0-3.400l-3.400 3.400" stroke="#e6e9f3" stroke-width="0.900"/></svg>
<svg style="left:426.0px;top:73.0px" width="17" height="17" viewBox="0 0 18 18"><path d="M2.500 2.500h9L5 11.500" fill="#cfd1d6" stroke="#adafb5" stroke-width="1"/><rect x="5.500" y="9.500" width="11" height="6.500" rx="3.200" fill="#e6e9f3" stroke="#adafb5" stroke-width="1.100"/><circle cx="13" cy="12.800" r="2.600" fill="#cfd1d6" stroke="#adafb5" stroke-width="0.900"/></svg>
<svg style="left:454.0px;top:73.0px" width="17" height="17" viewBox="0 0 18 18"><path d="M7.300 7.500L1.800 14.200 2.300 15.800 4.500 15.500 5 13.800 6.800 13.500 7.200 12 8.800 11.500 10 9.500z" fill="#fbd48e" stroke="#ef8a2b" stroke-width="1.200" stroke-linejoin="round"/><circle cx="10.500" cy="5.800" r="4.300" fill="#fbd48e" stroke="#ef8a2b" stroke-width="1.300"/><circle cx="11.800" cy="4.600" r="1.200" fill="#fde9c0" stroke="#ef8a2b" stroke-width="0.800"/><path d="M10.99 14.01L8.09 16.91" stroke="#2e86d3" stroke-width="1.350" stroke-linecap="round"/><circle cx="13.2" cy="11.8" r="3.15" fill="#fff" stroke="#2e86d3" stroke-width="1.250"/></svg>
<svg style="left:477.0px;top:73.0px" width="17" height="17" viewBox="0 0 18 18"><path d="M2 4V13.5A5.5 2 0 0 0 13 13.5V4" fill="#fbdb8b" stroke="#ef8a2b" stroke-width="1.3"/><ellipse cx="7.5" cy="4" rx="5.5" ry="2" fill="#fde9b5" stroke="#ef8a2b" stroke-width="1.3"/><path d="M10.79 14.21L7.89 17.11" stroke="#2e86d3" stroke-width="1.350" stroke-linecap="round"/><circle cx="13" cy="12" r="3.15" fill="#fff" stroke="#2e86d3" stroke-width="1.250"/></svg>
<svg style="left:500.0px;top:73.0px" width="17" height="17" viewBox="0 0 18 18"><path d="M7 3.500L10.500 2 15 11 11 13z" fill="#7cd08f" stroke="#2da14e" stroke-width="1"/><path d="M9.500 6L12.500 5 15.500 12 12 13.500z" fill="#f5a25a"/><rect x="2.500" y="2.500" width="4.500" height="13.500" fill="#8cc4ee" stroke="#2f7fd0" stroke-width="1.400"/><path d="M11.44 14.56L8.54 17.46" stroke="#2e86d3" stroke-width="1.350" stroke-linecap="round"/><circle cx="13.5" cy="12.5" r="2.95" fill="#fff" stroke="#2e86d3" stroke-width="1.250"/></svg>
<svg style="left:523.0px;top:73.0px" width="17" height="17" viewBox="0 0 18 18"><path d="M5 4.500L2 7.500 5 10.500M12 3.500L15 6M7 3C8.500 1.500 11 2.500 10 5 9.500 6 8.500 6.500 8.500 7.500" fill="none" stroke="#2e86d3" stroke-width="1.300"/><circle cx="8.500" cy="9.300" r="0.800" fill="#2e86d3"/><path d="M10.29 14.21L7.39 17.11" stroke="#2e86d3" stroke-width="1.350" stroke-linecap="round"/><circle cx="12.5" cy="12" r="3.15" fill="#fff" stroke="#2e86d3" stroke-width="1.250"/></svg>
<svg style="left:546.0px;top:73.0px" width="17" height="17" viewBox="0 0 18 18"><text x="9" y="12.800" text-anchor="middle" font-family="Liberation Sans,sans-serif" font-size="9.500" font-weight="bold" fill="#2e86d3" textLength="15.500" lengthAdjust="spacingAndGlyphs">SQL</text></svg>
<svg style="left:569.5px;top:73.0px" width="17" height="17" viewBox="0 0 18 18"><path d="M7.500 15C4 10 2.500 8.500 2.500 6.500a5 5 0 0 1 10 0C12.500 8.500 11 10 7.500 15z" fill="#f6b9bb" stroke="#e5434c" stroke-width="1.300"/><circle cx="7.500" cy="6.500" r="1.900" fill="#fff" stroke="#e5434c" stroke-width="1.200"/><path d="M11.37 14.13L8.46 17.04" stroke="#2e86d3" stroke-width="1.350" stroke-linecap="round"/><circle cx="13.5" cy="12" r="3.0500000000000003" fill="#fff" stroke="#2e86d3" stroke-width="1.250"/></svg>
<svg style="left:596.0px;top:73.0px" width="17" height="17" viewBox="0 0 18 18"><circle cx="9" cy="9" r="7" fill="none" stroke="#adafb5" stroke-width="1"/><path d="M13 9H5.500M8.500 6L5.500 9 8.500 12" stroke="#adafb5" stroke-width="1.100" fill="none"/></svg>
<svg style="left:619.0px;top:73.0px" width="17" height="17" viewBox="0 0 18 18"><circle cx="9" cy="9" r="7" fill="none" stroke="#adafb5" stroke-width="1"/><path d="M5 9H12.500M9.500 6L12.500 9 9.500 12" stroke="#adafb5" stroke-width="1.100" fill="none"/></svg>
<svg style="left:642.5px;top:73.0px" width="17" height="17" viewBox="0 0 18 18"><path d="M4.500 2.500H13.500V16L9 12.500 4.500 16z" fill="#f6b9bb" stroke="#e5434c" stroke-width="1.400"/></svg>
<svg style="left:658.5px;top:73.0px" width="17" height="17" viewBox="0 0 18 18"><path d="M5.800 7.500H12.200L9 10.800z" fill="#1d2740"/></svg>
<svg style="left:676.0px;top:73.0px" width="17" height="17" viewBox="0 0 18 18"><path d="M5.500 6V2.500H12l3 3V11" fill="none" stroke="#adafb5" stroke-width="1.1"/><path d="M12 2.500v3h3" fill="none" stroke="#adafb5" stroke-width="1"/><path d="M6.500 7.500C4 6.500 2.500 8.500 4.500 10c-2 1.500-0.500 3 1.500 2.500" fill="none" stroke="#adafb5" stroke-width="1.1"/><path d="M6.500 8.500c1.500 0 1.500 2-0.500 2.500" fill="none" stroke="#adafb5" stroke-width="1"/><circle cx="12" cy="12.500" r="3.800" fill="#cfd1d6" stroke="#adafb5" stroke-width="1"/></svg>
<svg style="left:699.0px;top:73.0px" width="17" height="17" viewBox="0 0 18 18"><path d="M5.500 6V2.500H12l3 3V11" fill="none" stroke="#adafb5" stroke-width="1.1"/><path d="M12 2.500v3h3" fill="none" stroke="#adafb5" stroke-width="1"/><path d="M6.500 7.500C4 6.500 2.500 8.500 4.500 10c-2 1.500-0.500 3 1.500 2.500" fill="none" stroke="#adafb5" stroke-width="1.1"/><path d="M6.500 8.500c1.500 0 1.500 2-0.500 2.500" fill="none" stroke="#adafb5" stroke-width="1"/><circle cx="12" cy="12.500" r="3.800" fill="#cfd1d6" stroke="#adafb5" stroke-width="1"/></svg>
<svg style="left:722.0px;top:73.0px" width="17" height="17" viewBox="0 0 18 18"><path d="M5.500 6V2.500H12l3 3V11" fill="none" stroke="#adafb5" stroke-width="1.1"/><path d="M12 2.500v3h3" fill="none" stroke="#adafb5" stroke-width="1"/><path d="M6.500 7.500C4 6.500 2.500 8.500 4.500 10c-2 1.500-0.500 3 1.500 2.500" fill="none" stroke="#adafb5" stroke-width="1.1"/><path d="M6.500 8.500c1.500 0 1.500 2-0.500 2.500" fill="none" stroke="#adafb5" stroke-width="1"/><circle cx="12" cy="12.500" r="3.800" fill="#cfd1d6" stroke="#adafb5" stroke-width="1"/></svg>
<svg style="left:745.0px;top:73.0px" width="17" height="17" viewBox="0 0 18 18"><path d="M5.500 6V2.500H12l3 3V11" fill="none" stroke="#adafb5" stroke-width="1.1"/><path d="M12 2.500v3h3" fill="none" stroke="#adafb5" stroke-width="1"/><path d="M6.500 7.500C4 6.500 2.500 8.500 4.500 10c-2 1.500-0.500 3 1.500 2.500" fill="none" stroke="#adafb5" stroke-width="1.1"/><path d="M6.500 8.500c1.500 0 1.500 2-0.500 2.500" fill="none" stroke="#adafb5" stroke-width="1"/><path d="M8.500 15.500L15.500 8.500" stroke="#adafb5" stroke-width="2.600"/><path d="M7.300 16.800l0.300-2 1.700 1.700z" fill="#adafb5"/></svg>
<svg style="left:779.5px;top:73.0px" width="17" height="17" viewBox="0 0 18 18"><path d="M2 10L10.500 2.500H15.500V8L7 16z" fill="#cfd1d6" stroke="#adafb5" stroke-width="0.900"/><circle cx="13" cy="5" r="1" fill="#e6e9f3"/></svg>
<svg style="left:801.5px;top:73.0px" width="17" height="17" viewBox="0 0 18 18"><text x="9" y="14.500" text-anchor="middle" font-family="Liberation Sans,sans-serif" font-size="15.500" fill="#9a9ca2" textLength="14.500" lengthAdjust="spacingAndGlyphs">1:1</text></svg>
<svg style="left:825.0px;top:73.0px" width="17" height="17" viewBox="0 0 18 18"><text x="0.500" y="14.300" font-family="Liberation Sans,sans-serif" font-size="15.500" fill="#9a9ca2">1</text><text x="10" y="9" font-family="Liberation Sans,sans-serif" font-size="8.500" fill="#9a9ca2">1</text><path d="M7.500 7.500h1.200" stroke="#adafb5" stroke-width="1"/><circle cx="12.500" cy="12.500" r="3.600" fill="#cfd1d6" stroke="#adafb5" stroke-width="1.200"/><path d="M10.800 10.800l3.400 3.400m0-3.400l-3.400 3.400" stroke="#e6e9f3" stroke-width="0.800"/></svg>
<svg style="left:859.5px;top:73.0px" width="17" height="17" viewBox="0 0 18 18"><path d="M6.5 2.3H13.7Q15.7 2.3 15.7 4.3V11.5L11.5 15.7H4.3Q2.3 15.7 2.3 13.7V6.5z" fill="#cfd1d6" stroke="#adafb5" stroke-width="1"/></svg>
<svg style="left:882.5px;top:73.0px" width="17" height="17" viewBox="0 0 18 18"><path d="M6.5 2.3H13.7Q15.7 2.3 15.7 4.3V11.5L11.5 15.7H4.3Q2.3 15.7 2.3 13.7V6.5z" fill="#cfd1d6" stroke="#adafb5" stroke-width="1"/><path d="M3.500 5L14.500 13" stroke="#e6e9f3" stroke-width="2"/></svg>
<svg style="left:906.0px;top:73.0px" width="17" height="17" viewBox="0 0 18 18"><path d="M6.5 2.3H13.7Q15.7 2.3 15.7 4.3V11.5L11.5 15.7H4.3Q2.3 15.7 2.3 13.7V6.5z" fill="#cfd1d6" stroke="#adafb5" stroke-width="1"/><path d="M4 5.500L14 12.500" stroke="#e9ebf2" stroke-width="1.300"/></svg>
<svg style="left:928.5px;top:73.0px" width="17" height="17" viewBox="0 0 18 18"><path d="M6.5 2.3H13.7Q15.7 2.3 15.7 4.3V11.5L11.5 15.7H4.3Q2.3 15.7 2.3 13.7V6.5z" fill="#e6e9f3" stroke="#adafb5" stroke-width="2.200"/><path d="M5 5L13 13" stroke="#adafb5" stroke-width="2.200"/><path d="M4.500 9.500L8.500 13.500H6L4.500 12z" fill="#cfd1d6"/></svg>
<svg style="left:951.5px;top:73.0px" width="17" height="17" viewBox="0 0 18 18"><path d="M6.5 2.3H13.7Q15.7 2.3 15.7 4.3V11.5L11.5 15.7H4.3Q2.3 15.7 2.3 13.7V6.5z" fill="#eef0f6" stroke="#cfd1d8" stroke-width="1"/><path d="M7.2 4.2H12.4Q13.8 4.2 13.8 5.6V10.8L10.8 13.8H5.6Q4.2 13.8 4.2 12.4V7.2z" fill="#d9dbe0"/><path d="M5 5L13 13" stroke="#eef0f6" stroke-width="1.500"/></svg>
<svg style="left:975.0px;top:73.0px" width="17" height="17" viewBox="0 0 18 18"><path d="M2.500 2.500L12 12M12 2.500L2.500 12" stroke="#adafb5" stroke-width="0.900"/><rect x="6" y="6" width="2.600" height="2.600" fill="#999"/><path d="M8.500 12.500H16.500M12.500 8.500V16.500" stroke="#999" stroke-width="1.200"/></svg>
<div style="left:448px;top:73px;width:1px;height:18px;background:#d3d7e3;"></div>
<div style="left:591px;top:73px;width:1px;height:18px;background:#d3d7e3;"></div>
<div style="left:380px;top:72px;width:18px;height:21px;background:#ffffff;border:1px solid #7f94c4;box-sizing:border-box;"></div>
<svg style="left:383.5px;top:75.0px" width="17" height="17" viewBox="0 0 18 18"><path d="M5.800 7.500H12.200L9 10.800z" fill="#1d2740"/></svg>
<svg style="left:13.0px;top:98.8px" width="17" height="17" viewBox="0 0 18 18"><path d="M5 2.500V15.500L14 11.500z" fill="#8c8c8c"/></svg>
<svg style="left:34.5px;top:98.8px" width="17" height="17" viewBox="0 0 18 18"><path d="M7 3.500V16L16 12z" fill="#8c8c8c"/><rect x="1.500" y="2" width="3.500" height="3.500" fill="#c4c4c8" stroke="#999" stroke-width="0.800"/></svg>
<svg style="left:63.0px;top:98.8px" width="17" height="17" viewBox="0 0 18 18"><path d="M3 3.500h6M6 3.500v5" stroke="#adafb5" stroke-width="1.500"/><circle cx="13" cy="5.500" r="2.800" fill="#cfd1d6"/><path d="M3.500 10h5l-5 6h5z" fill="#cfd1d6" stroke="#adafb5" stroke-width="0.900"/><path d="M9.500 12.500l2.500-1.800 2 2.300 2.500-2" stroke="#adafb5" stroke-width="1.100" fill="none"/></svg>
<svg style="left:86.0px;top:98.8px" width="17" height="17" viewBox="0 0 18 18"><path d="M2 11.500L7 7.500 11.500 11.500 16 8.500" stroke="#adafb5" stroke-width="1.300" fill="none"/></svg>
<svg style="left:110.0px;top:98.8px" width="17" height="17" viewBox="0 0 18 18"><rect x="3" y="3.500" width="12" height="10" fill="#f4f5f9" stroke="#adafb5" stroke-width="1.200"/></svg>
<svg style="left:390.5px;top:98.8px" width="17" height="17" viewBox="0 0 18 18"><path d="M2.500 3h8l-8 9.500h5z" fill="#cfd1d6" stroke="#adafb5" stroke-width="0.900"/><circle cx="12" cy="12.500" r="3.800" fill="#e6e9f3" stroke="#adafb5" stroke-width="1.100"/><path d="M9.800 12.500h4.400" stroke="#adafb5" stroke-width="1.100"/></svg>
<svg style="left:416.5px;top:98.8px" width="17" height="17" viewBox="0 0 18 18"><path d="M4.500 1.500V16.500M9 1.500V16.500M13.500 1.500V16.500M1.500 5H16.500M1.500 9H16.500M1.500 13H16.500" stroke="#222" stroke-width="1.250"/></svg>
<svg style="left:440.0px;top:98.8px" width="17" height="17" viewBox="0 0 18 18"><path d="M5 4V16M10 9V16M14 12V16M2 8H9M2 12.500H16" stroke="#adafb5" stroke-width="1.200"/><path d="M10 3h3.500a3 3 0 0 1 0 6H10v-1.800h3.300a1.200 1.200 0 0 0 0-2.400H10z" fill="#cfd1d6" stroke="#adafb5" stroke-width="0.900"/></svg>
<svg style="left:463.0px;top:98.8px" width="17" height="17" viewBox="0 0 18 18"><path d="M6 2.500L14.500 2.500 14.500 9.500 11 14.500 3 14.500 3 6.500z" fill="#f6d57a"/><rect x="4.7" y="1.2" width="2.600" height="2.600" fill="#555" stroke="#111" stroke-width="0.700"/><rect x="13.2" y="1.2" width="2.600" height="2.600" fill="#555" stroke="#111" stroke-width="0.700"/><rect x="13.2" y="8.2" width="2.600" height="2.600" fill="#555" stroke="#111" stroke-width="0.700"/><rect x="9.7" y="13.2" width="2.600" height="2.600" fill="#555" stroke="#111" stroke-width="0.700"/><rect x="1.7" y="13.2" width="2.600" height="2.600" fill="#555" stroke="#111" stroke-width="0.700"/><rect x="1.7" y="5.2" width="2.600" height="2.600" fill="#555" stroke="#111" stroke-width="0.700"/></svg>
<svg style="left:485.5px;top:98.8px" width="17" height="17" viewBox="0 0 18 18"><path d="M4.500 3V14.500H15M4.500 9H10V14.500" stroke="#adafb5" stroke-width="1.200" fill="none"/></svg>
<svg style="left:514.5px;top:98.8px" width="17" height="17" viewBox="0 0 18 18"><path d="M3.500 9A6 6.500 0 1 0 9.500 2.500C7 2.500 5 3.800 3.500 6" stroke="#adafb5" stroke-width="1.200" fill="none"/><path d="M3 2.500V6.500H7" stroke="#adafb5" stroke-width="1.200" fill="none"/></svg>
<svg style="left:538.0px;top:98.8px" width="17" height="17" viewBox="0 0 18 18"><path d="M9 3L14 8.500 8 15 3 9z" stroke="#adafb5" stroke-width="1" fill="none"/><rect x="8.2" y="1.7" width="2.600" height="2.600" fill="#cfd1d6" stroke="#adafb5" stroke-width="0.800"/><rect x="12.7" y="7.2" width="2.600" height="2.600" fill="#cfd1d6" stroke="#adafb5" stroke-width="0.800"/><rect x="6.7" y="13.7" width="2.600" height="2.600" fill="#cfd1d6" stroke="#adafb5" stroke-width="0.800"/><path d="M7.500 6L3.500 10M3.500 6.500V10H7" stroke="#adafb5" stroke-width="1.100" fill="none"/></svg>
<svg style="left:560.0px;top:98.8px" width="17" height="17" viewBox="0 0 18 18"><path d="M8 11V3M5.500 5.500L8 2.500 10.500 5.500z" stroke="#adafb5" stroke-width="1" fill="#cfd1d6"/><path d="M8 11H15M12.500 8.500L16 11 12.500 13.500z" stroke="#adafb5" stroke-width="1" fill="#cfd1d6"/><rect x="6.7" y="9.7" width="2.600" height="2.600" fill="#cfd1d6" stroke="#adafb5" stroke-width="0.800"/><rect x="2.7" y="13.7" width="2.600" height="2.600" fill="#cfd1d6" stroke="#adafb5" stroke-width="0.800"/><path d="M8 11L4 15" stroke="#adafb5" stroke-width="0.800" stroke-dasharray="1.500 1"/></svg>
<svg style="left:583.0px;top:98.8px" width="17" height="17" viewBox="0 0 18 18"><rect x="2.500" y="2.500" width="13" height="13" rx="3.500" fill="#cfd1d6" stroke="#adafb5" stroke-width="1"/><path d="M4.500 4.500L13.500 13.500" stroke="#e6e9f3" stroke-width="1" stroke-dasharray="2 1.500"/><rect x="3" y="3" width="2.600" height="2.600" fill="#e6e9f3" stroke="#adafb5" stroke-width="0.800"/><rect x="12.500" y="12.500" width="2.600" height="2.600" fill="#e6e9f3" stroke="#adafb5" stroke-width="0.800"/></svg>
<svg style="left:606.0px;top:98.8px" width="17" height="17" viewBox="0 0 18 18"><path d="M5 2.500L7.500 5 5 7.500 2.500 5z" fill="none" stroke="#adafb5" stroke-width="1"/><path d="M12 2.500L16 6 13 9 9 5.500z" fill="#cfd1d6" stroke="#adafb5" stroke-width="1"/><rect x="2.500" y="10" width="2.600" height="2.600" fill="#cfd1d6"/><rect x="3.500" y="13.500" width="3" height="3" fill="#cfd1d6"/><path d="M9 16L14 11M11 11H14V14" stroke="#adafb5" stroke-width="1.100" fill="none"/></svg>
<svg style="left:629.5px;top:98.8px" width="17" height="17" viewBox="0 0 18 18"><path d="M9 2.500L16 9 9 15.500 2 9z" fill="none" stroke="#adafb5" stroke-width="1" stroke-dasharray="2 1.200"/><path d="M2 9L9 15.500 16 9" fill="none" stroke="#adafb5" stroke-width="1.200"/><path d="M2.500 9.300L9 12 15.500 9.300" fill="#f2f3f8" stroke="#adafb5" stroke-width="0.800"/><path d="M4 5L6.500 7.500M14 5L11.500 7.500" stroke="#adafb5" stroke-width="1"/></svg>
<div style="left:57px;top:99px;width:1px;height:18px;background:#d3d7e3;"></div>
<div style="left:412px;top:99px;width:1px;height:18px;background:#d3d7e3;"></div>
<div style="left:508px;top:99px;width:1px;height:18px;background:#d3d7e3;"></div>
<svg style="left:4.0px;top:134.0px" width="17" height="17" viewBox="0 0 18 18"><path d="M5.50 2.50L5.50 14.00L8.20 11.50L10.10 15.70L12.10 14.80L10.20 10.80L13.70 10.60z" fill="#333"/></svg>
<svg style="left:4.0px;top:157.0px" width="17" height="17" viewBox="0 0 18 18"><rect x="2" y="2" width="14" height="11.500" fill="none" stroke="#333" stroke-width="1.200" stroke-dasharray="2 1.600"/><path d="M8.50 6.50L8.50 15.47L10.61 13.52L12.09 16.80L13.65 16.09L12.17 12.97L14.90 12.82z" fill="#333"/></svg>
<svg style="left:4.0px;top:180.0px" width="17" height="17" viewBox="0 0 18 18"><circle cx="9" cy="8.500" r="6.800" fill="none" stroke="#333" stroke-width="1.200" stroke-dasharray="2 1.600"/><path d="M8.50 7.00L8.50 15.97L10.61 14.02L12.09 17.30L13.65 16.59L12.17 13.47L14.90 13.32z" fill="#333"/></svg>
<svg style="left:4.0px;top:203.0px" width="17" height="17" viewBox="0 0 18 18"><path d="M2 15V7.500L8 2 16 8V15z" fill="none" stroke="#333" stroke-width="1.200" stroke-dasharray="2 1.600"/><path d="M8.50 7.50L8.50 16.47L10.61 14.52L12.09 17.80L13.65 17.09L12.17 13.97L14.90 13.82z" fill="#333"/></svg>
<svg style="left:4.0px;top:226.0px" width="17" height="17" viewBox="0 0 18 18"><rect x="1.8" y="2.8" width="14.4" height="13" fill="#fff" stroke="#3b3b3b" stroke-width="1.2"/><rect x="1.2000000000000002" y="2.1999999999999997" width="15.6" height="3.600" fill="#3f8fd6"/><rect x="2.1" y="3.0" width="13.8" height="1.300" fill="#9cc9ef"/><path d="M5.500 9A3.500 3 0 0 1 12 7.500M12.500 10.500A3.500 3 0 0 1 6 12" stroke="#2fb256" stroke-width="1.400" fill="none"/><path d="M13.500 6L12.300 9.200 10.200 7z M4.500 13.500L5.700 10.300 7.800 12.500z" fill="#2fb256"/></svg>
<svg style="left:4.0px;top:249.0px" width="17" height="17" viewBox="0 0 18 18"><rect x="1.8" y="2.8" width="14.4" height="13" fill="#fff" stroke="#3b3b3b" stroke-width="1.2"/><rect x="1.2000000000000002" y="2.1999999999999997" width="15.6" height="3.600" fill="#3f8fd6"/><rect x="2.1" y="3.0" width="13.8" height="1.300" fill="#9cc9ef"/><path d="M5 8l2.500 2.200M5 8h2M5 8v2 M13 8l-2.500 2.200M13 8h-2M13 8v2 M5 13.500l2.500-2.200M5 13.500h2M5 13.500v-2 M13 13.500l-2.500-2.200M13 13.500h-2M13 13.500v-2" stroke="#222" stroke-width="1" fill="none"/></svg>
<svg style="left:4.0px;top:272.0px" width="17" height="17" viewBox="0 0 18 18"><circle cx="7.500" cy="7.500" r="5.500" fill="#fff" stroke="#333" stroke-width="1.200"/><path d="M11.500 11.500L16 15.500" stroke="#333" stroke-width="1.300"/><path d="M4.500 7.500h6M7.500 4.500v6" stroke="#2e86d3" stroke-width="1.500"/></svg>
<svg style="left:4.0px;top:295.0px" width="17" height="17" viewBox="0 0 18 18"><circle cx="7.500" cy="7.500" r="5.500" fill="#fff" stroke="#333" stroke-width="1.200"/><path d="M11.500 11.500L16 15.500" stroke="#333" stroke-width="1.300"/><path d="M4.500 7.500h6" stroke="#2e86d3" stroke-width="1.500"/></svg>
<svg style="left:4.0px;top:318.0px" width="17" height="17" viewBox="0 0 18 18"><path d="M5.400 11V4.200a1.200 1.200 0 0 1 2.400 0V3.100a1.200 1.200 0 0 1 2.400 0V3.900a1.200 1.200 0 0 1 2.400 0V6a1.100 1.100 0 0 1 2.200 0V12c0 3-1.600 4.800-4.200 4.800H9c-1.800 0-2.800-1.200-4.200-3L2.300 10.800c-0.700-1 0.700-2.100 1.600-1.100z" fill="#f6d888" stroke="#ef8a2b" stroke-width="1.300" stroke-linejoin="round"/><path d="M7.800 4.200V8.500M10.200 3.900V8.500M12.600 5V8.500" stroke="#ef8a2b" stroke-width="1"/></svg>
<svg style="left:4.0px;top:341.0px" width="17" height="17" viewBox="0 0 18 18"><circle cx="9" cy="9" r="7" fill="#4a9ee0" stroke="#2277c4" stroke-width="1.200"/><path d="M9 8v5" stroke="#fff" stroke-width="1.700"/><circle cx="9" cy="5.300" r="1" fill="#fff"/></svg>
<svg style="left:4.0px;top:364.0px" width="17" height="17" viewBox="0 0 18 18"><rect x="2.500" y="8" width="5" height="8" fill="#ddd" stroke="#333" stroke-width="1.100"/><rect x="5" y="4" width="4" height="5" fill="#ddd" stroke="#333" stroke-width="1"/><rect x="9" y="3" width="4" height="6" fill="#ddd" stroke="#333" stroke-width="1"/><path d="M4.500 10.500v3" stroke="#333" stroke-width="1"/><circle cx="12.500" cy="12.500" r="4" fill="#4a9ee0" stroke="#2277c4" stroke-width="1"/><path d="M12.500 12v3" stroke="#fff" stroke-width="1.300"/><circle cx="12.500" cy="10.300" r="0.700" fill="#fff"/></svg>
<svg style="left:4.0px;top:387.0px" width="17" height="17" viewBox="0 0 18 18"><circle cx="9" cy="9" r="7" fill="#fff" stroke="#2e86d3" stroke-width="1.300"/><path d="M6 12L12 6M7.500 6H12V10.500" stroke="#2e86d3" stroke-width="1.500" fill="none"/></svg>
<svg style="left:4.0px;top:410.0px" width="17" height="17" viewBox="0 0 18 18"><path d="M2 12.500L12.500 3 16 6.500 5.500 16z" fill="#fbd98a" stroke="#ef8a2b" stroke-width="1.300"/><path d="M5.500 12L12.500 6" stroke="#4a7fb0" stroke-width="1"/><circle cx="5.500" cy="12" r="0.900" fill="#4a7fb0"/><circle cx="12.500" cy="6" r="0.900" fill="#4a7fb0"/></svg>
<svg style="left:4.0px;top:433.0px" width="17" height="17" viewBox="0 0 18 18"><path d="M3.500 2V16.500" stroke="#555" stroke-width="1.300"/><path d="M4.500 3H10V5H15.500L14 8.500 15.500 12H8.500V10H4.500z" fill="#f6b9bb" stroke="#e5434c" stroke-width="1.300"/></svg>
<svg style="left:4.0px;top:456.0px" width="17" height="17" viewBox="0 0 18 18"><path d="M3 2V16.500" stroke="#adafb5" stroke-width="1.300"/><path d="M3.500 3H12V9.500H3.500" fill="none" stroke="#adafb5" stroke-width="1.200"/><circle cx="12.500" cy="13" r="3.600" fill="#e6e9f3" stroke="#adafb5" stroke-width="1.100"/><path d="M10.700 11.200l3.600 3.600m0-3.600l-3.600 3.600" stroke="#adafb5" stroke-width="1"/></svg>
<svg style="left:1.5px;top:2.8px" width="14.8" height="14.8" viewBox="0 0 18 18"><defs><radialGradient id="gl" cx="0.35" cy="0.3" r="0.8"><stop offset="0" stop-color="#7fd36a"/><stop offset="0.55" stop-color="#2fa043"/><stop offset="1" stop-color="#1b6fb8"/></radialGradient></defs><circle cx="9" cy="9" r="8" fill="#2b7fd0"/><path d="M2 6C4 1.500 12 0 15.500 4.500 16 8 12 8.500 10.500 11.500 8 14 4 12 2 10z" fill="url(#gl)"/><path d="M3 13.500C6 16 12 16 15 12.500 12 14 6 14.500 3 13.500z" fill="#6db6ee" opacity="0.8"/></svg>
<svg style="left:1208.3px;top:143.6px" width="17.5" height="17.5" viewBox="0 0 18 18"><rect x="1.5" y="3" width="15" height="12.5" fill="#fff" stroke="#3b3b3b" stroke-width="1.2"/><rect x="0.9" y="2.4" width="16.2" height="3.600" fill="#3f8fd6"/><rect x="1.8" y="3.2" width="14.4" height="1.300" fill="#9cc9ef"/><path d="M9 7V14.800" stroke="#2e86d3" stroke-width="2.300" stroke-linecap="round"/><path d="M3.800 10.300H14.200" stroke="#2e86d3" stroke-width="2.500" stroke-linecap="round"/><path d="M6.800 14.300H11.200" stroke="#2e86d3" stroke-width="1.500" stroke-linecap="round"/></svg>
<svg style="left:1273.8px;top:143.6px" width="17.5" height="17.5" viewBox="0 0 18 18"><rect x="1.5" y="3" width="15" height="12.5" fill="#fff" stroke="#3b3b3b" stroke-width="1.2"/><rect x="0.9" y="2.4" width="16.2" height="3.600" fill="#3f8fd6"/><rect x="1.8" y="3.2" width="14.4" height="1.300" fill="#9cc9ef"/><path d="M5.500 4.500H12.500V15.500L9 13 5.500 15.500z" fill="#f6b9bb" stroke="#e5434c" stroke-width="1.300"/></svg>
<svg style="left:1207.8px;top:298px" width="17.5" height="17.5" viewBox="0 0 18 18"><rect x="3.500" y="1.500" width="13" height="3" fill="#3f8fd6"/><path d="M3.500 3.500H16.500" stroke="#9cc9ef" stroke-width="1"/><path d="M16 4.500V9" stroke="#3b3b3b" stroke-width="1.100"/><path d="M4 8H1.500V15.500H8" fill="none" stroke="#3b3b3b" stroke-width="1.200"/><path d="M5.500 6.500v3M4.500 7.500h2" stroke="#3b3b3b" stroke-width="1"/><path d="M8.500 16.500V8.500H11.500l1 1.500H16.500V16.500z" fill="#fbdb8b" stroke="#ef8a2b" stroke-width="1.300"/></svg>
<svg style="left:1291.8px;top:298px" width="17.5" height="17.5" viewBox="0 0 18 18"><rect x="1.5" y="3" width="15" height="12.5" fill="#fff" stroke="#3b3b3b" stroke-width="1.2"/><rect x="0.9" y="2.4" width="16.2" height="3.600" fill="#3f8fd6"/><rect x="1.8" y="3.2" width="14.4" height="1.300" fill="#9cc9ef"/><path d="M4 8.500h5M4 10.500h5M4 12.500h5" stroke="#3f8fd6" stroke-width="0.900"/><rect x="10" y="8" width="4.500" height="4.500" fill="#f2a23a"/><rect x="11.200" y="9.200" width="2.200" height="2.200" fill="#57b947"/></svg>
<svg style="left:1207.8px;top:507.8px" width="17.5" height="17.5" viewBox="0 0 18 18"><rect x="1.5" y="3" width="15" height="12.5" fill="#fff" stroke="#3b3b3b" stroke-width="1.2"/><rect x="0.9" y="2.4" width="16.2" height="3.600" fill="#3f8fd6"/><rect x="1.8" y="3.2" width="14.4" height="1.300" fill="#9cc9ef"/><path d="M5.50 4.00L5.50 14.92L8.06 12.55L9.87 16.54L11.77 15.69L9.96 11.89L13.29 11.70z" fill="#333"/></svg>
<svg style="left:1260.8px;top:507.5px" width="17.5" height="17.5" viewBox="0 0 18 18"><rect x="1.5" y="3" width="15" height="12.5" fill="#fff" stroke="#3b3b3b" stroke-width="1.2"/><rect x="0.9" y="2.4" width="16.2" height="3.600" fill="#3f8fd6"/><rect x="1.8" y="3.2" width="14.4" height="1.300" fill="#9cc9ef"/><text x="9" y="14.200" text-anchor="middle" font-family="Liberation Sans,sans-serif" font-size="10.500" fill="#7fb4ea">G</text></svg>
<svg style="left:1225.5px;top:318.5px" width="16" height="15" viewBox="0 0 16 15"><path d="M1.500 3V1.800H6.500l1 1.200" fill="#fff" stroke="#ef8a2b" stroke-width="1.100"/><rect x="1.500" y="3" width="13.500" height="10.500" rx="0.800" fill="#fbdb8b" stroke="#ef8a2b" stroke-width="1.200"/></svg>
<svg style="left:1225.5px;top:335.5px" width="16" height="15" viewBox="0 0 16 15"><path d="M1.500 13V2.500H6l1.500 1.500H13V6" fill="#fff" stroke="#ef8a2b" stroke-width="1.200"/><path d="M1.500 13.500V6.500H14.500V12.500a1 1 0 0 1-1 1z" fill="#fbdb8b" stroke="#ef8a2b" stroke-width="1.200"/></svg>
<svg style="left:1210px;top:320px" width="50" height="95" viewBox="0 0 50 95"><path d="M7.500 6.500H15M7.500 6.500V18M12 23H16" stroke="#aaa" stroke-width="1" stroke-dasharray="1 1.500" fill="none"/><path d="M24.500 30V34M29 39.500H32" stroke="#999" stroke-width="1" stroke-dasharray="1 1.500" fill="none"/><path d="M40.500 46V85" stroke="#444" stroke-width="1" stroke-dasharray="2.500 1.500" fill="none"/><path d="M45 55.500H49M45 72H49M45 88.500H49" stroke="#aaa" stroke-width="1" stroke-dasharray="1 1.500" fill="none"/></svg>
<svg style="left:1213px;top:338.5px" width="9" height="9" viewBox="0 0 9 9"><rect x="0.500" y="0.500" width="8" height="8" rx="1" fill="#fdfdfd" stroke="#9a9a9a" stroke-width="1"/><path d="M2.300 4.500H6.700" stroke="#2a3f98" stroke-width="1.100"/></svg>
<svg style="left:1229.5px;top:355px" width="9" height="9" viewBox="0 0 9 9"><rect x="0.500" y="0.500" width="8" height="8" rx="1" fill="#fdfdfd" stroke="#9a9a9a" stroke-width="1"/><path d="M2.300 4.500H6.700" stroke="#2a3f98" stroke-width="1.100"/></svg>
<svg style="left:1246px;top:371px" width="9" height="9" viewBox="0 0 9 9"><rect x="0.500" y="0.500" width="8" height="8" rx="1" fill="#fdfdfd" stroke="#9a9a9a" stroke-width="1"/><path d="M2.300 4.500H6.700" stroke="#2a3f98" stroke-width="1.100"/><path d="M4.500 2.300V6.700" stroke="#2a3f98" stroke-width="1.100"/></svg>
<svg style="left:1246px;top:387.5px" width="9" height="9" viewBox="0 0 9 9"><rect x="0.500" y="0.500" width="8" height="8" rx="1" fill="#fdfdfd" stroke="#9a9a9a" stroke-width="1"/><path d="M2.300 4.500H6.700" stroke="#2a3f98" stroke-width="1.100"/><path d="M4.500 2.300V6.700" stroke="#2a3f98" stroke-width="1.100"/></svg>
<svg style="left:1246px;top:404px" width="9" height="9" viewBox="0 0 9 9"><rect x="0.500" y="0.500" width="8" height="8" rx="1" fill="#fdfdfd" stroke="#9a9a9a" stroke-width="1"/><path d="M2.300 4.500H6.700" stroke="#2a3f98" stroke-width="1.100"/><path d="M4.500 2.300V6.700" stroke="#2a3f98" stroke-width="1.100"/></svg>
<svg style="left:1242px;top:351.5px" width="17" height="16" viewBox="0 0 17 16"><path d="M5 1.500H12l3 3V14H10" fill="#fff" stroke="#333" stroke-width="1.200"/><path d="M12 1.500v3h3" fill="none" stroke="#333" stroke-width="1"/><circle cx="6" cy="7.500" r="5.200" fill="#ead0ec" stroke="#b873bd" stroke-width="1"/><path d="M3.500 5.500c1 0.500 2-0.500 2.500 0.500s-0.500 2 0.500 3" stroke="#cfa0d3" stroke-width="0.900" fill="none"/><circle cx="11" cy="11" r="4" fill="#b45cbb"/><path d="M7 11h8M11 7v8M8.500 8.500c1.500 1 3.500 1 5 0M8.500 13.500c1.500-1 3.500-1 5 0" stroke="#f0d6f2" stroke-width="0.700" fill="none"/></svg>
<svg style="left:1258.5px;top:368px" width="17" height="15" viewBox="0 0 17 15"><path d="M4.500 3V1.500H11l3 3V12" fill="#f4f4f4" stroke="#c4c4c4" stroke-width="1"/><path d="M1.500 3.500H9l2.500 2.500V14H1.500z" fill="#f8f8f8" stroke="#c4c4c4" stroke-width="1"/><rect x="3" y="5" width="6" height="2.500" fill="#ddd"/><text x="6.500" y="13" text-anchor="middle" font-family="Liberation Sans,sans-serif" font-size="5.500" fill="#c8c8c8" textLength="8.500" lengthAdjust="spacingAndGlyphs">TILE</text></svg>
<svg style="left:1258.5px;top:384.5px" width="17" height="15" viewBox="0 0 17 15"><path d="M5 3V1.500H12l3 3V14H11" fill="#e7c3ea" stroke="#b155b8" stroke-width="1.200"/><rect x="1.500" y="3" width="9.500" height="10.500" fill="#e7c3ea" stroke="#b155b8" stroke-width="1.200"/><rect x="2.800" y="4.500" width="7" height="5.500" fill="#f6d886"/><path d="M2.800 8c1.500-2 2.500 1 3.500-0.500s2-1.500 3.500 0.500" stroke="#5a9ad8" stroke-width="1" fill="none"/></svg>
<svg style="left:1258.5px;top:401px" width="17" height="15" viewBox="0 0 17 15"><path d="M5 3V1.500H12l3 3V14H11" fill="#f2f2f2" stroke="#c6c6c6" stroke-width="1"/><rect x="1.500" y="3" width="9.500" height="10.500" fill="#f2f2f2" stroke="#c6c6c6" stroke-width="1"/><rect x="2.800" y="4.500" width="7" height="5.500" fill="#e2e2e2"/><path d="M2.800 6c1.500 1.500 2.500 2 3.500 1s2-1 3.500-1" stroke="#c8c8c8" stroke-width="0.900" fill="none"/></svg>
<svg style="left:15px;top:776px" width="16" height="17" viewBox="0 0 16 17"><path d="M0.500 3.200L6.800 2.200V8H0.500z M7.800 2L15.500 0.800V8H7.800z M0.500 9H6.800V14.800L0.500 13.800z M7.800 9H15.500V16.200L7.800 15z" fill="#fff"/></svg>
<svg style="left:54px;top:774px" width="20" height="20" viewBox="0 0 20 20"><circle cx="11.500" cy="7" r="4.600" fill="none" stroke="#222" stroke-width="1.300"/><path d="M8.300 10.500L2 17.500" stroke="#222" stroke-width="1.400"/></svg>
<svg style="left:287.2px;top:767px" width="77" height="36" viewBox="0 0 77 36"><defs><linearGradient id="sea" x1="0" y1="0" x2="1" y2="0.300"><stop offset="0" stop-color="#7cc0fb"/><stop offset="0.600" stop-color="#3f7cf0"/><stop offset="1" stop-color="#2f62d8"/></linearGradient><linearGradient id="col" x1="0" y1="0" x2="1" y2="0"><stop offset="0" stop-color="#b98a5a"/><stop offset="0.500" stop-color="#d9b58c"/><stop offset="1" stop-color="#9c6f44"/></linearGradient></defs><path d="M2 36C8 24 24 15 46 14L77 13V36z" fill="url(#sea)"/><path d="M10 7c0-2.500 3.500-3 4.500-1.500 1.500-3 7-2.500 7.500 1 3 0 4 4.500 0.500 5.500H11C7.500 12 7.500 7.500 10 7z" fill="#b4cede"/><path d="M28 1.500l1 2 2-1-1 2 2 1-2 0.500 0 2-1.500-1.500-1.500 1.500 0-2-2-0.500 2-1-1-2 2 1z" fill="#e46be8"/><circle cx="41.500" cy="6.500" r="1.800" fill="#f5a21a"/><circle cx="6.500" cy="22.500" r="1.700" fill="#33c65a"/><rect x="62" y="4" width="5" height="16" fill="url(#col)"/><ellipse cx="64.5" cy="4" rx="2.5" ry="1.0" fill="#e2c4a0"/><rect x="67" y="6" width="5" height="15" fill="url(#col)"/><ellipse cx="69.5" cy="6" rx="2.5" ry="1.0" fill="#e2c4a0"/><rect x="57" y="7" width="5" height="15" fill="url(#col)"/><ellipse cx="59.5" cy="7" rx="2.5" ry="1.0" fill="#e2c4a0"/><rect x="72" y="8" width="5" height="14" fill="url(#col)"/><ellipse cx="74.5" cy="8" rx="2.5" ry="1.0" fill="#e2c4a0"/><rect x="51" y="10" width="5" height="13" fill="url(#col)"/><ellipse cx="53.5" cy="10" rx="2.5" ry="1.0" fill="#e2c4a0"/><rect x="46" y="13" width="5" height="10" fill="url(#col)"/><ellipse cx="48.5" cy="13" rx="2.5" ry="1.0" fill="#e2c4a0"/><rect x="40" y="15" width="5" height="8" fill="url(#col)"/><ellipse cx="42.5" cy="15" rx="2.5" ry="1.0" fill="#e2c4a0"/><rect x="62" y="11" width="5" height="12" fill="url(#col)"/><ellipse cx="64.5" cy="11" rx="2.5" ry="1.0" fill="#e2c4a0"/><rect x="56" y="13" width="5" height="11" fill="url(#col)"/><ellipse cx="58.5" cy="13" rx="2.5" ry="1.0" fill="#e2c4a0"/><rect x="67" y="13" width="5" height="10" fill="url(#col)"/><ellipse cx="69.5" cy="13" rx="2.5" ry="1.0" fill="#e2c4a0"/><rect x="50" y="16" width="5" height="8" fill="url(#col)"/><ellipse cx="52.5" cy="16" rx="2.5" ry="1.0" fill="#e2c4a0"/><rect x="61" y="17" width="5" height="7" fill="url(#col)"/><ellipse cx="63.5" cy="17" rx="2.5" ry="1.0" fill="#e2c4a0"/><rect x="44" y="18" width="5" height="6" fill="url(#col)"/><ellipse cx="46.5" cy="18" rx="2.5" ry="1.0" fill="#e2c4a0"/><rect x="72" y="15" width="5" height="8" fill="url(#col)"/><ellipse cx="74.5" cy="15" rx="2.5" ry="1.0" fill="#e2c4a0"/><rect x="17" y="23" width="10" height="13" fill="url(#col)"/><ellipse cx="22.0" cy="23" rx="5.0" ry="1.6666666666666667" fill="#e0c09a"/><rect x="23" y="27" width="9" height="9" fill="url(#col)"/><ellipse cx="27.5" cy="27" rx="4.5" ry="1.5" fill="#e0c09a"/><rect x="33" y="25" width="10" height="11" fill="url(#col)"/><ellipse cx="38.0" cy="25" rx="5.0" ry="1.6666666666666667" fill="#e0c09a"/><rect x="9" y="30" width="10" height="6" fill="url(#col)"/><ellipse cx="14.0" cy="30" rx="5.0" ry="1.6666666666666667" fill="#e0c09a"/><rect x="27" y="30" width="8" height="6" fill="url(#col)"/><ellipse cx="31.0" cy="30" rx="4.0" ry="1.3333333333333333" fill="#e0c09a"/><rect x="40" y="29" width="11" height="7" fill="url(#col)"/><ellipse cx="45.5" cy="29" rx="5.5" ry="1.8333333333333333" fill="#e0c09a"/><rect x="50" y="27" width="14" height="9" fill="url(#col)"/><ellipse cx="57.0" cy="27" rx="7.0" ry="2.3333333333333335" fill="#e0c09a"/><rect x="63" y="29" width="14" height="7" fill="url(#col)"/><ellipse cx="70.0" cy="29" rx="7.0" ry="2.3333333333333335" fill="#e0c09a"/></svg>
<svg style="left:378.2px;top:773.2px" width="22" height="22" viewBox="0 0 22 22"><circle cx="11" cy="11" r="10.300" fill="#fbc116"/><path d="M11 11L2.100 5.800A10.300 10.300 0 0 1 19.900 5.800z" fill="#e33e2b"/><path d="M11 11H21.300A10.300 10.300 0 0 0 19.900 5.800L11 5.800z" fill="#e33e2b"/><path d="M11 11L2.100 5.800A10.300 10.300 0 0 0 9.500 21.200L14 13z" fill="#259a46"/><path d="M19.900 5.800H11L15.500 13.600 10.500 21.300A10.300 10.300 0 0 0 19.900 5.800z" fill="#fbc116"/><circle cx="11" cy="11" r="4.800" fill="#fff"/><circle cx="11" cy="11" r="3.800" fill="#2f7be8"/></svg>
<svg style="left:424px;top:774px" width="23" height="20" viewBox="0 0 23 20"><path d="M1 3.500a1 1 0 0 1 1-1h6.500l1.500 1.500H21a1 1 0 0 1 1 1V17.500H1z" fill="#f3b81f"/><path d="M1 6.500H22V17.500a1 1 0 0 1-1 1H2a1 1 0 0 1-1-1z" fill="#fcd766"/><path d="M6.500 18.500V11.500a1 1 0 0 1 1-1h8a1 1 0 0 1 1 1V18.500H14V13.500H9V18.500z" fill="#3f9be8"/></svg>
<svg style="left:469px;top:773px" width="24" height="23" viewBox="0 0 24 23"><rect x="6.500" y="1.500" width="16" height="5.200" fill="#41a5ee"/><rect x="6.500" y="6.700" width="16" height="5" fill="#2b7cd3"/><rect x="6.500" y="11.700" width="16" height="5" fill="#185abd"/><rect x="6.500" y="16.700" width="16" height="5" fill="#103f91"/><rect x="1" y="6" width="11.500" height="11.500" rx="1" fill="#185abd"/><text x="6.800" y="15" text-anchor="middle" font-family="Liberation Sans,sans-serif" font-size="8.500" font-weight="bold" fill="#fff">W</text></svg>
<svg style="left:516.5px;top:773.5px" width="22" height="22" viewBox="0 0 22 22"><defs><linearGradient id="ph" x1="0" y1="0" x2="1" y2="1"><stop offset="0" stop-color="#2fb4f0"/><stop offset="1" stop-color="#2a86e0"/></linearGradient></defs><rect x="0.500" y="0.500" width="21" height="21" rx="1" fill="url(#ph)"/><circle cx="14.500" cy="5.500" r="2" fill="#fff"/><path d="M11 21.500L17.500 10.500 21.500 15.500V20.500a1 1 0 0 1-1 1z" fill="#5b6fd6"/><path d="M0.500 21.500V17L8.500 8.500 20 21.500z" fill="#12407f"/></svg>
<div style="left:551px;top:767px;width:46px;height:36px;background:#4d5a61;"></div>
<svg style="left:562.5px;top:773.5px" width="22" height="22" viewBox="0 0 22 22"><defs><radialGradient id="gl2" cx="0.350" cy="0.300" r="0.800"><stop offset="0" stop-color="#86dd66"/><stop offset="0.600" stop-color="#2da53f"/><stop offset="1" stop-color="#1f7fc0"/></radialGradient></defs><circle cx="11" cy="11" r="10.300" fill="#2c86d6"/><path d="M1.500 8C3 2 12 -0.500 18 4 21 8.500 15 10 13 13.500 10 17.500 4.500 15.500 1.500 12z" fill="url(#gl2)"/><path d="M3 16C7 20 15 20 19 15 15 17.500 7 18 3 16z" fill="#7cc0f2" opacity="0.850"/></svg>
<div style="left:371px;top:801px;width:38px;height:2px;background:#76b9ed;"></div>
<div style="left:417px;top:801px;width:38px;height:2px;background:#76b9ed;"></div>
<div style="left:463px;top:801px;width:38px;height:2px;background:#76b9ed;"></div>
<div style="left:509px;top:801px;width:30px;height:2px;background:#76b9ed;"></div>
<div style="left:551px;top:801px;width:46px;height:2px;background:#76b9ed;"></div>
<div style="left:539.5px;top:801px;width:7.5px;height:2px;background:#5d89ad;"></div>
<svg style="left:956px;top:776px" width="17" height="17" viewBox="0 0 17 17"><path d="M13 3.500A6.500 6.500 0 1 0 13 13.500" fill="none" stroke="#d8382c" stroke-width="3.600"/><path d="M9 2L5 11" stroke="#3f8fd6" stroke-width="1.800"/><path d="M2.500 10.500L7 12.500 5.500 16 1 14z" fill="#e8b67a"/></svg>
<svg style="left:979.5px;top:776px" width="16" height="17" viewBox="0 0 16 17"><path d="M8 16C3 12 1 8 1.500 3.500 4 1.500 6 1.500 8 2.500 10 1.500 12 1.500 14.500 3.500 15 8 13 12 8 16z" fill="#e2383f"/><circle cx="8" cy="5.500" r="1.200" fill="#fff"/><circle cx="5.500" cy="9" r="1.200" fill="#fff"/><circle cx="10.500" cy="8" r="1.200" fill="#fff"/><path d="M8 5.500L5.500 9M8 5.500L10.500 8M8 6V12" stroke="#fff" stroke-width="0.800"/></svg>
<svg style="left:1001.5px;top:778px" width="17" height="12" viewBox="0 0 17 12"><path d="M4 11.500H13.500a3 3 0 0 0 0.500-5.900A4 4 0 0 0 6.500 4 3 3 0 0 0 2.500 6.500 2.600 2.600 0 0 0 4 11.500z" fill="#1e8ae6"/><path d="M4 11.500H13.500a3 3 0 0 0 2.200-1.200L6.500 4A3 3 0 0 0 2.500 6.500 2.600 2.600 0 0 0 4 11.500z" fill="#1672c8"/></svg>
<svg style="left:1023.5px;top:776px" width="18" height="18" viewBox="0 0 18 18"><circle cx="12" cy="3.500" r="2.300" fill="#5b62c8"/><circle cx="16" cy="5" r="1.600" fill="#5b62c8"/><rect x="8" y="6.500" width="8" height="7.500" rx="1.500" fill="#5b62c8"/><rect x="1" y="4" width="9.500" height="9.500" rx="1" fill="#4a52b8"/><text x="5.700" y="11.800" text-anchor="middle" font-family="Liberation Sans,sans-serif" font-size="8" font-weight="bold" fill="#fff">T</text><circle cx="12.500" cy="13.500" r="3.500" fill="#8fd06a"/><path d="M10.800 13.500l1.300 1.300 2.200-2.400" stroke="#fff" stroke-width="1" fill="none"/></svg>
<svg style="left:1046px;top:776.5px" width="16" height="16" viewBox="0 0 16 16"><defs><linearGradient id="cg" x1="0" y1="0" x2="1" y2="1"><stop offset="0" stop-color="#f06aa0"/><stop offset="0.500" stop-color="#8a78d8"/><stop offset="1" stop-color="#5fc8b0"/></linearGradient></defs><rect x="0.500" y="0.500" width="15" height="15" fill="#7db83a"/><rect x="2" y="2" width="12" height="12" fill="url(#cg)"/></svg>
<svg style="left:1068.5px;top:777px" width="16" height="15" viewBox="0 0 16 15"><rect x="0.500" y="0.500" width="15" height="14" rx="1.500" fill="#2b2f30" stroke="#555a5c" stroke-width="1"/><path d="M3.500 7.500c2-3 6-3.500 9-0.500-2 3-6 3.500-9 0.500z" fill="none" stroke="#76b900" stroke-width="1.100"/><circle cx="8" cy="7.500" r="1.600" fill="none" stroke="#76b900" stroke-width="0.900"/></svg>
<svg style="left:1093px;top:777px" width="14" height="15" viewBox="0 0 14 15"><path d="M2 1.500L4 6M5 0.500L6 5.500M8 0.500L7.800 5.500M10.500 2L9.500 6.500" stroke="#d8262c" stroke-width="1.500" stroke-linecap="round"/><path d="M4 7.500C6 6 10 6.500 11.500 8.500S11 13.500 8 14 3 13 3.500 11" fill="none" stroke="#d8262c" stroke-width="2"/><path d="M1 10.500L4 9.500" stroke="#d8262c" stroke-width="1.500" stroke-linecap="round"/></svg>
<svg style="left:1113px;top:776.5px" width="17" height="17" viewBox="0 0 17 17"><path d="M8 1C6 2.200 4 2.800 1.500 3 1.500 9 3 13 8 15.500 13 13 14.500 9 14.500 3 12 2.800 10 2.200 8 1z" fill="#fff"/><path d="M8 1V15.500M1.500 7.500H14.500" stroke="#2d3a40" stroke-width="0.800"/><path d="M12 8.500L16.500 16.500H7.500z" fill="#f8c31c"/><path d="M12 11v3" stroke="#222" stroke-width="1"/><circle cx="12" cy="15.300" r="0.500" fill="#222"/></svg>
<svg style="left:1136px;top:777px" width="15" height="15" viewBox="0 0 15 15"><rect x="1.500" y="1" width="12" height="8.500" fill="#d9d9d9" stroke="#9a9a9a" stroke-width="1"/><path d="M4 2.500l6 5.500m0-5.500l-6 5.500" stroke="#e81123" stroke-width="1.600"/><path d="M1 13.500H6V11.500H3 M9 13.500H14V11.500H11" stroke="#d0d0d0" stroke-width="1.200" fill="none"/></svg>
<svg style="left:1157px;top:777px" width="18" height="15" viewBox="0 0 18 15"><path d="M1 5.500H3.500L7 2.500V12.500L3.500 9.500H1z" fill="none" stroke="#fff" stroke-width="1"/><path d="M9.500 5.500a3 3 0 0 1 0 4M11.500 3.500a6 6 0 0 1 0 8M13.800 1.800a8.500 8.500 0 0 1 0 11.500" stroke="#fff" stroke-width="1" fill="none"/></svg>
<svg style="left:1182px;top:777px" width="14" height="15" viewBox="0 0 14 15"><path d="M1.500 13.500A10.500 10.500 0 0 1 12 3" stroke="#c8c8c8" stroke-width="1.100" fill="none"/><path d="M4.500 13.500A7.500 7.500 0 0 1 12 6" stroke="#e0e0e0" stroke-width="1.100" fill="none"/><path d="M7.500 13.500A4.500 4.500 0 0 1 12 9" stroke="#fff" stroke-width="1.100" fill="none"/><circle cx="11.300" cy="13" r="1.200" fill="#fff"/></svg>
<svg style="left:1201px;top:778px" width="17" height="13" viewBox="0 0 17 13"><rect x="5.500" y="3.500" width="10" height="6.500" fill="none" stroke="#fff" stroke-width="0.900"/><path d="M8.500 5l3.500 3.500m0-3.500l-3.500 3.500" stroke="#fff" stroke-width="0.900"/><path d="M1.500 1v3M4 1v3M0.800 4H4.700V6.500L2.750 8V12" stroke="#fff" stroke-width="0.900" fill="none"/></svg>
<svg style="left:1227px;top:776px" width="18" height="17" viewBox="0 0 18 17"><path d="M3 15C1 13 3 9.500 6 10.500c1.500 0.500 1 3-0.500 4" stroke="#fff" stroke-width="1.200" fill="none"/><path d="M6 13.500L11.500 2.500A1.500 1.500 0 0 1 14 4L9 14.500" stroke="#fff" stroke-width="1.200" fill="none"/><path d="M11 8.500c2-1.500 5-1 4.500 1.500" stroke="#fff" stroke-width="1.100" fill="none"/></svg>
<svg style="left:1253.5px;top:777.5px" width="24" height="14" viewBox="0 0 24 14"><rect x="0.500" y="0.500" width="23" height="13" rx="1" fill="none" stroke="#fff" stroke-width="1"/><path d="M3 4h18M3 6.500h18" stroke="#fff" stroke-width="0.900" stroke-dasharray="1.500 1"/><path d="M3 10H5M6.500 10H17.500M19 10H21" stroke="#fff" stroke-width="0.900"/></svg>
<svg style="left:1388px;top:776px" width="24" height="24" viewBox="0 0 24 24"><path d="M1.500 1.500H16.500V13.500H6.500V16.500L3.500 13.500H1.500z" fill="#fff"/><path d="M4 4.500H14M4 7H14M4 9.500H14" stroke="#2b3b44" stroke-width="0.900"/><circle cx="15.500" cy="15" r="6.800" fill="#1f2b31" stroke="#55626a" stroke-width="0.800"/><text x="15.500" y="18.800" text-anchor="middle" font-family="Liberation Sans,sans-serif" font-size="10" fill="#fff">8</text></svg>
<div style="left:1421px;top:766px;width:1px;height:37px;background:#3c484e;"></div>
<svg style="left:0;top:0" width="1427" height="803" viewBox="0 0 1427 803"><path d="M571.6 446.8L572.6 444.0L573.8 446.6zM582.9 424.7L584.3 421.2L585.7 424.7zM635.5 465.8L637.3 462.7L639.0 464.8zM677.7 406.6L680.3 402.7L681.2 405.9zM650.5 448.4L651.9 444.6L653.7 446.7zM757.2 444.5L760.2 446.3L756.9 447.8zM702.6 485.2L704.9 481.9L706.1 484.6zM684.9 611.6L686.4 607.8L687.9 611.6z" fill="#1c5ba9" stroke="#1c5ba9" stroke-width="0.500"/><path d="M435.5 210.7L438.8 216.7L446.7 229.4L450.8 243.6L451.5 248.4M438.8 215.3L438.3 207.9L439.5 206.7M439.2 214.9L447.0 205.5L448.8 207.9M442.9 209.9L444.3 211.4M444.6 229.4L446.7 229.2M449.7 238.0L452.5 237.6M436.2 246.9L437.3 249.2L464.2 241.9M460.1 243.7L463.1 242.8M460.5 226.0L461.3 230.1L459.7 235.3L461.6 243.0M442.9 246.7L445.0 255.5M442.7 247.3L450.7 268.2M461.5 295.7L468.5 293.5M455.6 315.8L462.9 312.5M515.0 324.8L516.9 331.5L511.3 333.7M503.0 329.2L503.7 329.9M452.8 275.2L455.9 281.8M459.2 289.1L463.9 303.1M459.7 309.2L463.6 315.6M473.7 290.9L475.8 298.7M447.4 319.1L449.6 324.3M503.8 359.3L508.8 352.9M557.6 410.1L563.6 416.7L567.6 410.1M515.3 325.0L517.3 332.0L510.8 333.6M537.7 388.8L539.7 389.8L539.3 391.8L541.7 393.4M466.9 323.0L470.9 329.6M475.5 335.0L481.5 339.9M486.2 344.3L493.4 349.9M498.2 354.3L509.8 364.3M514.8 368.8L521.3 374.8M526.1 378.8L533.3 384.2M546.6 398.7L553.2 405.3M564.0 419.7L566.6 428.6M568.6 434.6L571.6 443.6M573.2 447.6L575.5 456.5M577.1 462.5L579.5 471.5M621.4 480.0L651.0 448.4L665.5 434.1L656.6 424.9L669.0 414.9L690.3 391.8L683.3 385.0L708.6 360.6L711.5 364.4L717.3 357.4M669.0 414.9L661.5 407.1L662.4 402.7L658.5 398.4L672.0 385.0L676.3 383.6L678.4 380.4L676.3 379.7M661.5 390.2L665.0 392.3M658.5 398.4L660.6 400.1M648.4 424.5L650.5 425.4L655.8 419.3L653.7 415.8L657.1 416.7L656.6 424.9M655.8 419.3L661.5 421.0M584.3 421.9L586.6 442.8L591.6 475.1M581.3 427.1L583.9 427.1M582.5 432.7L593.5 432.7L593.0 435.5L601.0 433.2L615.7 418.1L619.7 421.9M586.6 442.0L589.2 442.0M581.9 462.9L592.3 458.5M590.9 462.9L595.3 462.5M591.8 470.4L597.9 469.8M607.5 425.4L611.5 429.2M601.0 433.2L603.1 436.2M610.4 462.9L609.2 449.8L612.2 445.4M624.9 428.9L626.1 431.5L631.4 438.5L633.6 436.2M635.4 442.0L637.1 443.7L641.5 439.3L638.8 439.7M641.5 440.2L651.0 448.9M644.1 443.7L642.3 446.3M674.6 467.2L684.2 480.0M672.0 469.3L674.9 466.2M685.0 383.6L687.1 381.8M690.3 377.5L692.0 379.2M631.0 457.1L632.4 459.2M638.8 448.1L641.1 450.2M717.6 455.3L732.6 465.7M717.6 456.0L719.1 462.8M732.6 465.7L740.1 457.5L746.8 452.3L792.3 425.1L789.8 421.2M782.6 423.9L787.1 436.6M789.8 421.2L791.9 422.7M764.7 434.4L768.4 434.1L770.7 438.1M771.9 431.7L776.7 431.7L778.2 435.1M746.8 452.3L749.8 455.6L752.8 455.3M739.0 452.3L742.3 462.8M741.5 469.0L767.7 452.6L774.4 449.3L776.7 453.0L779.6 452.3M781.1 452.3L790.9 447.8M781.1 452.3L783.4 448.6M781.1 452.3L783.4 457.5L795.3 460.5M767.7 452.6L779.6 471.7L782.3 470.5L785.6 477.7L788.6 476.9L790.4 482.2M771.4 468.7L778.2 464.2M775.2 476.9L781.1 471.7M758.7 459.0L761.0 464.2L763.2 464.5L761.4 468.7L763.5 472.5M764.4 455.3L766.2 459.0M769.9 451.5L771.4 454.5M772.2 450.8L773.7 453.8M732.6 465.7L733.0 480.7L734.5 487.4L730.0 494.1M733.0 479.2L736.3 478.9M741.5 469.0L740.8 471.7L744.5 472.9L743.8 483.7L742.0 485.2M740.8 474.7L743.0 473.2M740.8 464.2L747.5 461.3M690.0 474.0L694.2 476.9L693.0 479.9L695.2 479.2M694.2 476.9L704.2 483.7M704.2 481.9L707.6 479.9M704.9 480.7L706.4 483.7M704.2 483.7L700.2 491.1L690.0 497.9M698.2 501.6L716.1 490.4M706.4 503.1L714.7 497.9M594.9 488.0L608.7 485.8L621.8 479.5M592.4 516.1L592.4 520.8M591.8 521.2L583.3 524.6M583.1 525.4L582.2 531.2M577.4 547.7L581.8 540.0L586.5 537.1M580.3 537.9L581.8 540.0M574.4 554.2L572.9 558.0M591.6 475.2L590.3 482.9L594.9 488.0L597.7 505.5L601.3 510.8M585.0 471.6L588.6 479.1M592.8 475.9L597.7 475.2M597.7 502.4L601.3 501.3L608.7 501.3L610.4 511.9L612.9 516.8M591.8 509.1L598.1 508.3L601.3 510.8M623.5 526.1L627.3 523.5L626.1 519.7L632.0 517.6L635.2 523.1L659.5 509.8L676.0 501.3L687.1 498.1L690.0 496.4M659.5 509.8L661.2 512.9M676.0 501.3L674.4 499.8M676.0 501.3L680.7 512.9L682.8 516.1M680.7 512.9L665.9 516.8L666.9 519.3L647.9 526.7L644.3 535.2M647.9 526.7L648.9 529.9M670.1 522.5L675.4 520.4L683.9 533.7M679.6 525.6L682.8 524.6M675.0 530.5L675.8 531.4M653.2 534.5L656.4 535.2M653.2 535.2L659.5 550.0L662.7 551.1M656.4 553.2L662.7 550.0L670.1 546.4L673.3 547.9L678.6 544.7L684.9 540.5L687.1 546.8M656.4 553.2L657.8 566.9L660.6 572.2L662.7 595.5L666.9 596.6L669.1 615.6L675.4 615.6M675.4 617.8L677.5 620.9M659.5 565.9L664.2 565.2L663.8 562.7M655.3 587.5L662.7 587.5M656.4 602.9L656.4 607.8L665.9 607.2L663.8 604.0M684.9 480.1L682.8 486.5L684.9 493.9L686.6 498.1M670.1 480.8L675.4 488.6L682.8 485.4M681.8 485.4L682.8 488.6M700.8 490.7L716.7 510.8L723.1 517.2L730.5 520.4L735.8 524.6M686.0 598.7L686.4 622.0M684.5 622.0L692.4 622.0M706.1 556.4L710.4 559.5M712.5 556.4L726.2 558.5L729.4 561.6M726.2 558.5L728.4 557.8" fill="none" stroke="#1c5ba9" stroke-width="1.750" stroke-linejoin="round"/><path d="M516.7 338.3L514.2 345.5L506.8 355.9M612.2 445.4L624.9 431.5M623.2 465.1L642.3 444.6M651.0 448.4L674.6 467.2M718.1 469.0L705.6 482.0M718.4 469.5L712.4 474.7M708.2 557.0L701.9 561.6L695.5 570.1M690.9 575.4L694.5 580.7M694.5 587.1L689.6 594.5" fill="none" stroke="#1c5ba9" stroke-width="1.750" stroke-dasharray="7.500 6"/><rect x="703" y="434.300" width="15" height="4.200" rx="2.100" fill="#a3a3a3"/><path d="M709.500 439.300H712.300V449.600H717.600V454.500H708.200V446.400H709.500z" fill="#f04850" stroke="#f7e23a" stroke-width="0.700"/><circle cx="590.3" cy="482.9" r="2.300" fill="#fff" stroke="#6fbf73" stroke-width="0.700"/><circle cx="590.3" cy="482.9" r="0.900" fill="#7a4fc0"/><circle cx="675" cy="615" r="2.300" fill="#fff" stroke="#6fbf73" stroke-width="0.700"/><circle cx="675" cy="615" r="0.900" fill="#7a4fc0"/></svg>
<div style="left:117px;top:42px;width:266.5px;height:555px;background:#fcfcfd;border:1px solid #b4bccb;box-sizing:border-box;box-shadow:1.5px 1.5px 2px rgba(70,78,105,0.5);border-top:none;"></div>
<div style="left:114.4px;top:526.3px;width:267.8px;height:22.3px;background:#d3e3f3;border:2.200px solid #ed1c24;box-sizing:border-box;"></div>
<svg style="left:373.5px;top:71px" width="5" height="8" viewBox="0 0 5 8"><path d="M0.500 0.500L4.500 4 0.500 7.500z" fill="#111"/></svg>
<div style="left:140.8px;top:108.7px;width:238.7px;height:1px;background:#aeb8cf;"></div>
<div style="left:140.8px;top:200.0px;width:238.7px;height:1px;background:#aeb8cf;"></div>
<div style="left:140.8px;top:247.8px;width:238.7px;height:1px;background:#aeb8cf;"></div>
<div style="left:140.8px;top:274.9px;width:238.7px;height:1px;background:#aeb8cf;"></div>
<div style="left:140.8px;top:366.3px;width:238.7px;height:1px;background:#aeb8cf;"></div>
<svg style="left:373.5px;top:398.9px" width="5" height="8" viewBox="0 0 5 8"><path d="M0.500 0.500L4.500 4 0.500 7.500z" fill="#111"/></svg>
<div style="left:140.8px;top:415.1px;width:238.7px;height:1px;background:#aeb8cf;"></div>
<svg style="left:373.5px;top:468.3px" width="5" height="8" viewBox="0 0 5 8"><path d="M0.500 0.500L4.500 4 0.500 7.500z" fill="#111"/></svg>
<svg style="left:373.5px;top:490.2px" width="5" height="8" viewBox="0 0 5 8"><path d="M0.500 0.500L4.500 4 0.500 7.500z" fill="#111"/></svg>
<svg style="left:373.5px;top:511.9px" width="5" height="8" viewBox="0 0 5 8"><path d="M0.500 0.500L4.500 4 0.500 7.500z" fill="#111"/></svg>
<svg style="left:373.5px;top:533.6px" width="5" height="8" viewBox="0 0 5 8"><path d="M0.500 0.500L4.500 4 0.500 7.500z" fill="#111"/></svg>
<svg style="left:373.5px;top:555px" width="5" height="8" viewBox="0 0 5 8"><path d="M0.500 0.500L4.500 4 0.500 7.500z" fill="#111"/></svg>
<div style="left:140.8px;top:570.9px;width:238.7px;height:1px;background:#aeb8cf;"></div>
<div style="left:380px;top:526px;width:193px;height:158.5px;background:#fcfcfd;border:1px solid #b4bccb;box-sizing:border-box;box-shadow:1.5px 1.5px 2px rgba(70,78,105,0.5);"></div>
<div style="left:377.8px;top:618.5px;width:195.9px;height:24px;background:#d3e3f3;border:2.200px solid #ed1c24;box-sizing:border-box;"></div>
<div style="left:403.6px;top:550.8px;width:165.4px;height:1px;background:#aeb8cf;"></div>
<svg style="left:121px;top:44px" width="18" height="18" viewBox="0 0 18 18"><path d="M9.500 2.500H15.500V15.500H2.500V10" fill="none" stroke="#3b3b3b" stroke-width="1.200"/><rect x="3.300" y="3.300" width="11.500" height="11.500" fill="none"/><path d="M9 4H14.800V9.500H9z" fill="#fbdcb8"/><path d="M3.300 14.800V10.500L7.500 9 10 11.500 14.800 8V14.800z" fill="#b7dfb6"/><path d="M8.500 8.500L10.500 10.500 13.500 7.800" stroke="#3f8fd0" stroke-width="1.500" fill="none"/><path d="M1.00 5.50L9.40 5.50M2.23 2.53L8.17 8.47M5.20 1.30L5.20 9.70M8.17 2.53L2.23 8.47" stroke="#ef8a2b" stroke-width="1.3" fill="none"/></svg>
<svg style="left:121px;top:253.5px" width="18" height="18" viewBox="0 0 18 18"><rect x="4.500" y="2" width="11.500" height="11.500" fill="#fff" stroke="#3b3b3b" stroke-width="1.200"/><rect x="6" y="3.500" width="8.500" height="4" fill="#fbdcb8"/><rect x="9" y="7.500" width="5.500" height="4.500" fill="#b7dfb6"/><path d="M1.500 5.500V16H15z" fill="#d4d4d4" stroke="#2b2b2b" stroke-width="1.300" stroke-linejoin="round"/><path d="M4.500 11V13.500H8z" fill="#fff" stroke="#2b2b2b" stroke-width="0.800"/><path d="M5.5 12.5L15 3.2" stroke="#2f7fd0" stroke-width="3.200" stroke-linecap="butt"/><path d="M13.4 5.0L15 3.2" stroke="#e8505a" stroke-width="3.200"/><path d="M4.2 13.8l0.4-2.600 2.200 2.200z" fill="#2f7fd0"/></svg>
<svg style="left:382.5px;top:529px" width="18" height="18" viewBox="0 0 18 18"><circle cx="9" cy="9" r="6.500" fill="#fff" stroke="#2e86d3" stroke-width="1.200"/><text x="9" y="12.700" text-anchor="middle" font-family="Liberation Sans,sans-serif" font-size="10.500" fill="#2e86d3">?</text></svg>
<span class="t" id="t0" style="left:21px;top:1.00px;font-size:11.4px;line-height:20px;color:#000;letter-spacing:-0.210px;">Новые ключи * (georg) - ZuluGIS 2021</span>
<span class="t" id="t1" style="left:18px;top:22.00px;font-size:11.5px;line-height:20px;color:#111;letter-spacing:-0.246px;">ФАЙЛ</span>
<div style="left:18.00px;top:37.28px;width:8.50px;height:1px;background:#111;"></div>
<span class="t" id="t2" style="left:66px;top:22.00px;font-size:11.5px;line-height:20px;color:#111;letter-spacing:-0.482px;">ПРАВКА</span>
<div style="left:66.00px;top:37.28px;width:8.28px;height:1px;background:#111;"></div>
<span class="t" id="t3" style="left:125px;top:22.00px;font-size:11.5px;line-height:20px;color:#111;letter-spacing:-0.422px;">СЛОЙ</span>
<div style="left:132.50px;top:37.28px;width:7.56px;height:1px;background:#111;"></div>
<span class="t" id="t4" style="left:172px;top:22.00px;font-size:11.5px;line-height:20px;color:#111;letter-spacing:-0.169px;">КАРТА</span>
<div style="left:172.00px;top:37.28px;width:6.70px;height:1px;background:#111;"></div>
<span class="t" id="t5" style="left:223px;top:22.00px;font-size:11.5px;line-height:20px;color:#111;letter-spacing:-0.245px;">ВИД</span>
<div style="left:223.00px;top:37.28px;width:7.68px;height:1px;background:#111;"></div>
<span class="t" id="t6" style="left:263px;top:22.00px;font-size:11.5px;line-height:20px;color:#111;letter-spacing:-0.988px;">РАСТР</span>
<div style="left:263.00px;top:37.28px;width:6.91px;height:1px;background:#111;"></div>
<span class="t" id="t7" style="left:311px;top:22.00px;font-size:11.5px;line-height:20px;color:#111;letter-spacing:-0.266px;">ТАБЛИЦА</span>
<div style="left:311.00px;top:37.28px;width:6.66px;height:1px;background:#111;"></div>
<span class="t" id="t8" style="left:380px;top:22.00px;font-size:11.5px;line-height:20px;color:#111;letter-spacing:-0.250px;">ЗАДАЧИ</span>
<div style="left:380.00px;top:37.28px;width:6.95px;height:1px;background:#111;"></div>
<span class="t" id="t9" style="left:441px;top:22.00px;font-size:11.5px;line-height:20px;color:#111;letter-spacing:-1.315px;">СЕРВИС</span>
<div style="left:447.98px;top:37.28px;width:7.69px;height:1px;background:#111;"></div>
<span class="t" id="t10" style="left:498px;top:22.00px;font-size:11.5px;line-height:20px;color:#111;letter-spacing:-0.477px;">ОКНО</span>
<div style="left:498.00px;top:37.28px;width:8.95px;height:1px;background:#111;"></div>
<span class="t" id="t11" style="left:546px;top:22.00px;font-size:11.5px;line-height:20px;color:#111;letter-spacing:-0.455px;">СПРАВКА</span>
<div style="left:546.00px;top:37.28px;width:8.31px;height:1px;background:#111;"></div>
<span class="t" id="t12" style="left:29px;top:123.50px;font-size:11.5px;line-height:20px;color:#77797f;letter-spacing:-0.154px;">Новые ключи *</span>
<span class="t" id="t13" style="left:1209px;top:122.20px;font-size:11.3px;line-height:20px;color:#1e1e1e;letter-spacing:0.080px;">Навигатор</span>
<span class="t" id="t14" style="left:1209px;top:276.80px;font-size:11.3px;line-height:20px;color:#1e1e1e;letter-spacing:-0.121px;">Рабочее место</span>
<span class="t" id="t15" style="left:1209px;top:486.80px;font-size:11.3px;line-height:20px;color:#1e1e1e;letter-spacing:-0.247px;">Объект</span>
<span class="t" id="t16" style="left:1225.7px;top:142.20px;font-size:9.5px;line-height:20px;color:#111;letter-spacing:-0.293px;">Навигатор</span>
<span class="t" id="t17" style="left:1291.5px;top:142.20px;font-size:9.5px;line-height:20px;color:#222;letter-spacing:-0.266px;">Закладки</span>
<span class="t" id="t18" style="left:1225.8px;top:296.30px;font-size:9.5px;line-height:20px;color:#111;letter-spacing:-0.352px;">Рабочее место</span>
<span class="t" id="t19" style="left:1310px;top:296.30px;font-size:9.5px;line-height:20px;color:#222;letter-spacing:-0.370px;">Макеты</span>
<span class="t" id="t20" style="left:1226px;top:506.50px;font-size:9.5px;line-height:20px;color:#111;letter-spacing:-0.477px;">Объект</span>
<span class="t" id="t21" style="left:1278.8px;top:506.50px;font-size:9.5px;line-height:20px;color:#222;letter-spacing:-0.188px;">Группа</span>
<span class="t" id="t22" style="left:1245.5px;top:316.00px;font-size:12px;line-height:20px;color:#222;letter-spacing:-0.522px;">Проекты</span>
<span class="t" id="t23" style="left:1245.5px;top:332.50px;font-size:12px;line-height:20px;color:#222;letter-spacing:-0.641px;">Карты</span>
<span class="t" id="t24" style="left:1261.5px;top:349.00px;font-size:12px;line-height:20px;color:#111;letter-spacing:-0.641px;font-weight:bold;">Новые ключи</span>
<span class="t" id="t25" style="left:1277.5px;top:365.50px;font-size:12px;line-height:20px;color:#222;letter-spacing:-0.493px;">Open Street map</span>
<span class="t" id="t26" style="left:1277.5px;top:382.00px;font-size:12px;line-height:20px;color:#111;letter-spacing:-0.810px;font-weight:bold;">Сети тс</span>
<span class="t" id="t27" style="left:1277.5px;top:398.50px;font-size:12px;line-height:20px;color:#222;letter-spacing:-0.484px;">Сети в перспективе</span>
<span class="t" id="t28" style="left:2px;top:698.30px;font-size:11.3px;line-height:20px;color:#1e1e1e;letter-spacing:-0.035px;">Сообщения</span>
<span class="t" id="t29" style="left:41px;top:730.50px;font-size:11.5px;line-height:20px;color:#222;letter-spacing:-0.269px;">Сообщения</span>
<span class="t" id="t30" style="left:1166.5px;top:748.00px;font-size:11px;line-height:20px;color:#222;letter-spacing:-0.224px;">X:5883034.41 м</span>
<span class="t" id="t31" style="left:1249px;top:748.00px;font-size:11px;line-height:20px;color:#222;letter-spacing:-0.176px;">Y:15894102.30 м</span>
<span class="t" id="t32" style="left:1339px;top:748.00px;font-size:11px;line-height:20px;color:#222;letter-spacing:-0.117px;">M1:12400</span>
<span class="t" id="t33" style="left:1402px;top:748.00px;font-size:11px;line-height:20px;color:#222;letter-spacing:-0.323px;">Z15</span>
<span class="t" id="t34" style="left:82px;top:775.00px;font-size:13.5px;line-height:20px;color:#2b2b2b;letter-spacing:0.010px;">Введите здесь текст для поиска</span>
<span class="t" id="t35" style="left:1333px;top:766.00px;font-size:11.5px;line-height:20px;color:#fff;letter-spacing:-0.696px;">16:59</span>
<span class="t" id="t36" style="left:1320.7px;top:783.00px;font-size:11.5px;line-height:20px;color:#fff;letter-spacing:-0.626px;">13.07.2022</span>
<span class="t" id="t37" style="left:1286.5px;top:775.00px;font-size:11.5px;line-height:20px;color:#fff;letter-spacing:-1.141px;">ENG</span>
<span class="t" id="t38" style="left:145.6px;top:43.20px;font-size:11px;line-height:20px;color:#111;letter-spacing:-0.318px;">Создать...</span>
<div style="left:145.59px;top:58.29px;width:7.96px;height:1px;background:#111;"></div>
<span class="t" id="t39" style="left:145.6px;top:65.00px;font-size:11px;line-height:20px;color:#111;letter-spacing:0.088px;">Создать инженерную сеть</span>
<span class="t" id="t40" style="left:145.6px;top:86.30px;font-size:11px;line-height:20px;color:#111;letter-spacing:0.027px;">Создать по образцу...</span>
<div style="left:205.88px;top:101.40px;width:6.13px;height:1px;background:#111;"></div>
<span class="t" id="t41" style="left:145.6px;top:113.00px;font-size:11px;line-height:20px;color:#111;letter-spacing:0.016px;">Уничтожить...</span>
<div style="left:145.59px;top:128.10px;width:6.50px;height:1px;background:#111;"></div>
<span class="t" id="t42" style="left:145.6px;top:135.00px;font-size:11px;line-height:20px;color:#111;letter-spacing:-0.001px;">Переименовать...</span>
<div style="left:145.59px;top:150.10px;width:7.91px;height:1px;background:#111;"></div>
<span class="t" id="t43" style="left:145.6px;top:156.50px;font-size:11px;line-height:20px;color:#111;letter-spacing:-0.034px;">Скопировать...</span>
<div style="left:153.50px;top:171.60px;width:4.94px;height:1px;background:#111;"></div>
<span class="t" id="t44" style="left:145.6px;top:178.00px;font-size:11px;line-height:20px;color:#111;letter-spacing:-0.278px;">Очистить...</span>
<div style="left:153.86px;top:193.10px;width:5.75px;height:1px;background:#111;"></div>
<span class="t" id="t45" style="left:145.6px;top:204.60px;font-size:11px;line-height:20px;color:#111;letter-spacing:-0.121px;">Упаковать...</span>
<span class="t" id="t46" style="left:145.6px;top:226.30px;font-size:11px;line-height:20px;color:#111;letter-spacing:-0.204px;">Извлечь...</span>
<span class="t" id="t47" style="left:145.6px;top:253.00px;font-size:11px;line-height:20px;color:#111;letter-spacing:-0.296px;">Структура слоя...</span>
<div style="left:157.97px;top:268.10px;width:6.01px;height:1px;background:#111;"></div>
<span class="t" id="t48" style="left:145.6px;top:280.30px;font-size:11px;line-height:20px;color:#111;letter-spacing:-0.269px;">Индекс...</span>
<div style="left:145.59px;top:295.40px;width:7.91px;height:1px;background:#111;"></div>
<span class="t" id="t49" style="left:145.6px;top:301.00px;font-size:11px;line-height:20px;color:#111;letter-spacing:-0.445px;">Сжать...</span>
<div style="left:153.33px;top:316.10px;width:7.37px;height:1px;background:#111;"></div>
<span class="t" id="t50" style="left:145.6px;top:322.90px;font-size:11px;line-height:20px;color:#111;letter-spacing:-0.039px;">Оптимизация...</span>
<div style="left:171.12px;top:338.00px;width:7.59px;height:1px;background:#111;"></div>
<span class="t" id="t51" style="left:145.6px;top:344.70px;font-size:11px;line-height:20px;color:#111;letter-spacing:0.046px;">Трансформирование...</span>
<div style="left:145.59px;top:359.79px;width:6.11px;height:1px;background:#111;"></div>
<span class="t" id="t52" style="left:145.6px;top:370.80px;font-size:11px;line-height:20px;color:#111;letter-spacing:-0.019px;">Опубликовать для Веб-служб ZuluServer</span>
<span class="t" id="t53" style="left:145.6px;top:392.90px;font-size:11px;line-height:20px;color:#111;letter-spacing:0.216px;">Операции</span>
<span class="t" id="t54" style="left:145.6px;top:419.40px;font-size:11px;line-height:20px;color:#111;letter-spacing:-0.527px;">WMS...</span>
<span class="t" id="t55" style="left:145.6px;top:441.10px;font-size:11px;line-height:20px;color:#111;letter-spacing:-0.597px;">WMTS...</span>
<span class="t" id="t56" style="left:145.6px;top:462.30px;font-size:11px;line-height:20px;color:#111;letter-spacing:0.166px;">Tile-сервер</span>
<span class="t" id="t57" style="left:145.6px;top:484.20px;font-size:11px;line-height:20px;color:#111;letter-spacing:0.054px;">Космоснимки СКАНЭКС</span>
<span class="t" id="t58" style="left:145.6px;top:505.90px;font-size:11px;line-height:20px;color:#111;letter-spacing:-0.509px;">2ГИС</span>
<span class="t" id="t59" style="left:145.6px;top:527.60px;font-size:11px;line-height:20px;color:#111;letter-spacing:0.003px;">OpenStreetMap</span>
<span class="t" id="t60" style="left:145.6px;top:549.00px;font-size:11px;line-height:20px;color:#111;letter-spacing:-0.232px;">ArcGIS Online</span>
<span class="t" id="t61" style="left:145.6px;top:576.40px;font-size:11px;line-height:20px;color:#111;letter-spacing:-0.064px;">Информация...</span>
<div style="left:159.44px;top:591.50px;width:9.06px;height:1px;background:#111;"></div>
<span class="t" id="t62" style="left:408.6px;top:528.50px;font-size:11px;line-height:20px;color:#111;letter-spacing:-0.029px;">О сервисе OpenStreetMap</span>
<span class="t" id="t63" style="left:408.6px;top:556.00px;font-size:11px;line-height:20px;color:#111;letter-spacing:-0.086px;">MapQuest Open</span>
<span class="t" id="t64" style="left:408.6px;top:577.20px;font-size:11px;line-height:20px;color:#111;letter-spacing:-0.019px;">MapQuest Satellite</span>
<span class="t" id="t65" style="left:408.6px;top:598.70px;font-size:11px;line-height:20px;color:#111;letter-spacing:-0.048px;">OpenCircleMap</span>
<span class="t" id="t66" style="left:408.6px;top:620.50px;font-size:11px;line-height:20px;color:#111;letter-spacing:-0.020px;">OpenStreetMap</span>
<span class="t" id="t67" style="left:408.6px;top:641.80px;font-size:11px;line-height:20px;color:#111;letter-spacing:-0.303px;">OSM Landscape</span>
<span class="t" id="t68" style="left:408.6px;top:663.50px;font-size:11px;line-height:20px;color:#111;letter-spacing:-0.198px;">OSM Transport</span>

</body></html>
